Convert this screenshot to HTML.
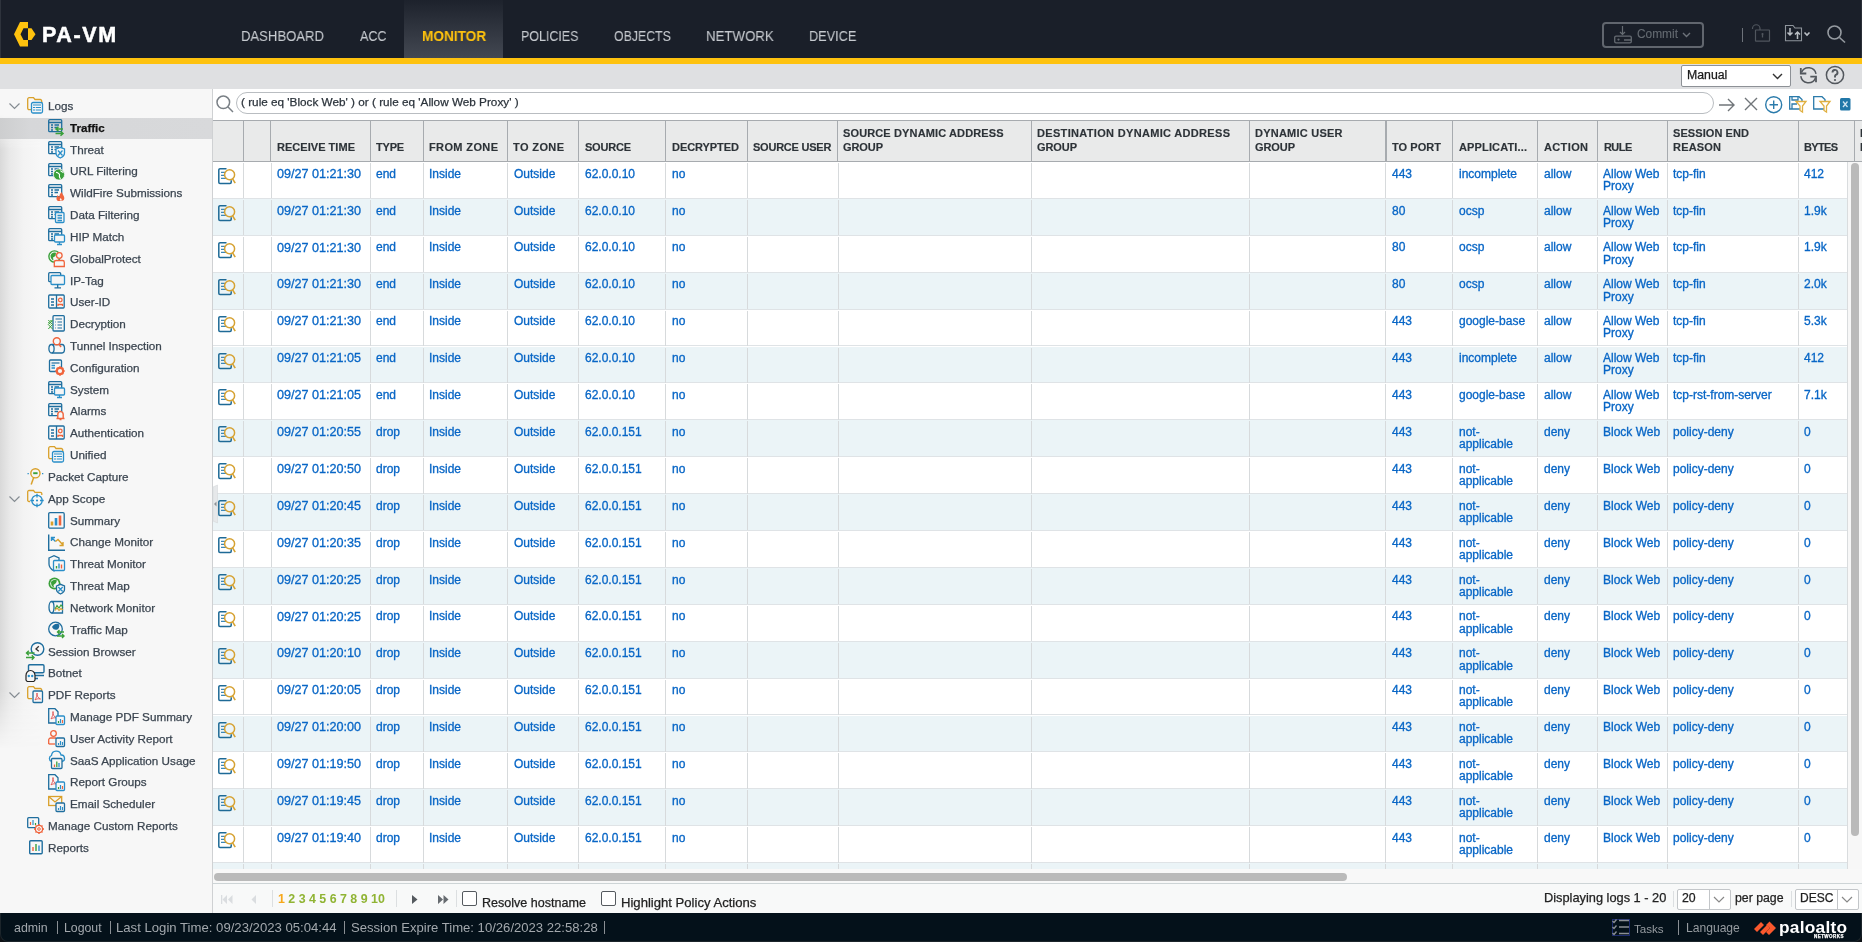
<!DOCTYPE html><html><head><meta charset="utf-8"><style>
*{box-sizing:border-box;margin:0;padding:0}
html,body{width:1862px;height:942px;overflow:hidden;background:#fff;font-family:"Liberation Sans",sans-serif}
.t{position:absolute;white-space:pre;line-height:1;-webkit-text-stroke:0.25px currentColor;will-change:transform}
.a{position:absolute}
svg{position:absolute;overflow:visible}
</style></head><body>
<div class="a" style="left:0;top:0;width:1862px;height:58px;background:#1a1f29"></div>
<div class="a" style="left:404px;top:0;width:99px;height:58px;background:linear-gradient(#1d222c,#434852)"></div>
<div class="a" style="left:0;top:0;width:1px;height:58px;background:#2e333c"></div>
<div class="a" style="left:1861px;top:0;width:1px;height:58px;background:#2a2f38"></div>
<div class="a" style="left:0;top:58px;width:1862px;height:6px;background:#fec20e"></div>
<svg style="left:14px;top:22px" width="23" height="25" viewBox="0 0 23 25"><path d="M14 0H6L0 12.3L6 24.6H14V18H9.5L6.5 12.3L9.5 6.2H14Z" fill="#fec20e"/><path d="M14 6.2H17.5L21.5 12.3L17.5 18H14Z" fill="#fec20e"/></svg>
<div class="t" style="left:42px;top:24.80px;font-size:21.5px;color:#ffffff;font-weight:bold;letter-spacing:0.075em;-webkit-text-stroke:0.5px currentColor;">PA-VM</div>
<div class="t" style="left:241px;top:27.50px;font-size:15.0px;color:#c6cacf;font-weight:normal;transform:scaleX(0.8733);transform-origin:0 0;-webkit-text-stroke:0.05px currentColor;">DASHBOARD</div>
<div class="t" style="left:359.7px;top:27.50px;font-size:15.0px;color:#c6cacf;font-weight:normal;transform:scaleX(0.8400);transform-origin:0 0;-webkit-text-stroke:0.05px currentColor;">ACC</div>
<div class="t" style="left:421.7px;top:27.50px;font-size:15.0px;color:#fec20e;font-weight:bold;transform:scaleX(0.9087);transform-origin:0 0;-webkit-text-stroke:0.05px currentColor;">MONITOR</div>
<div class="t" style="left:521.1px;top:27.50px;font-size:15.0px;color:#c6cacf;font-weight:normal;transform:scaleX(0.8293);transform-origin:0 0;-webkit-text-stroke:0.05px currentColor;">POLICIES</div>
<div class="t" style="left:613.5px;top:27.50px;font-size:15.0px;color:#c6cacf;font-weight:normal;transform:scaleX(0.8213);transform-origin:0 0;-webkit-text-stroke:0.05px currentColor;">OBJECTS</div>
<div class="t" style="left:705.7px;top:27.50px;font-size:15.0px;color:#c6cacf;font-weight:normal;transform:scaleX(0.8833);transform-origin:0 0;-webkit-text-stroke:0.05px currentColor;">NETWORK</div>
<div class="t" style="left:808.8px;top:27.50px;font-size:15.0px;color:#c6cacf;font-weight:normal;transform:scaleX(0.8487);transform-origin:0 0;-webkit-text-stroke:0.05px currentColor;">DEVICE</div>
<div class="a" style="left:1602px;top:22px;width:102px;height:26px;border:2px solid #61666e;border-radius:4px"></div>
<svg style="left:1614px;top:26px" width="18" height="19" viewBox="0 0 18 19" fill="none" stroke="#656b72" stroke-width="1.2"><path d="M8.5 0V8.5M6 6L8.5 8.5L11 6"/><path d="M17.3 13.5V11.5A1.3 1.3 0 0 0 16 10.2H2A1.3 1.3 0 0 0 0.7 11.5V15.5A1.3 1.3 0 0 0 2 16.8H16A1.3 1.3 0 0 0 17.3 15.5V14H10" stroke-width="1.3"/><circle cx="4.5" cy="13.6" r="1.1" fill="#656b72" stroke="none"/></svg>
<div class="t" style="left:1637px;top:29.23px;font-size:11.9px;color:#656b72;font-weight:normal;-webkit-text-stroke:0.1px currentColor;">Commit</div>
<svg style="left:1682px;top:32px" width="9" height="6" viewBox="0 0 9 6" fill="none" stroke="#6d727a" stroke-width="1.4"><path d="M1 1L4.5 4.5L8 1"/></svg>
<div class="a" style="left:1741.5px;top:28px;width:1.5px;height:14px;background:#6d727a"></div>
<svg style="left:1752px;top:25px" width="19" height="18" viewBox="0 0 19 18" fill="none" stroke="#50565e" stroke-width="1.2"><path d="M0.5 4V3.5A3.7 3.7 0 0 1 8 3.5V5"/><rect x="3.5" y="5" width="14" height="11.2" rx="0.5"/><path d="M10.5 8.5V12.5" stroke-width="1.3"/><circle cx="10.5" cy="9" r="1" fill="#50565e" stroke="none"/></svg>
<svg style="left:1785px;top:25px" width="32" height="17" viewBox="0 0 32 17" fill="none" stroke="#8f959c" stroke-width="1.1"><path d="M0.5 0.5H8L10 3H16.5V15.8H0.5Z"/><path d="M5 3V10M2.5 7.5L5 10L7.5 7.5M12.5 14V7M10 9.5L12.5 7L15 9.5" stroke="#b9bec4" stroke-width="1.5"/><path d="M19.5 7.5L22 10L24.5 7.5" stroke="#b9bec4" stroke-width="1.6"/></svg>
<svg style="left:1827px;top:25px" width="19" height="18" viewBox="0 0 19 18" fill="none" stroke="#969ba1" stroke-width="1.6"><circle cx="7.5" cy="7.5" r="6.5"/><path d="M12.5 12.5L18 17.5"/></svg>
<div class="a" style="left:0;top:64px;width:1862px;height:25px;background:#dfe0e2"></div>
<div class="a" style="left:1681px;top:65px;width:110px;height:22px;background:#fff;border:1px solid #8d9196;border-radius:2px"></div>
<div class="t" style="left:1687px;top:69.09px;font-size:12.3px;color:#1a1a1a;font-weight:normal;">Manual</div>
<svg style="left:1772px;top:73px" width="11" height="7" viewBox="0 0 11 7" fill="none" stroke="#333" stroke-width="1.4"><path d="M1 1L5.5 5.5L10 1"/></svg>
<svg style="left:1799.5px;top:67px" width="17" height="16" viewBox="0 0 17 16" fill="none" stroke="#52575d" stroke-width="1.5"><path d="M16 6.8A7.6 7.6 0 0 0 1.6 5.2M0.8 9.2A7.6 7.6 0 0 0 15.4 11"/><path d="M0.8 1V6.5H6.3M10.3 9.6H16V15.2" stroke-width="1.8"/></svg>
<svg style="left:1826px;top:66px" width="18" height="18" viewBox="0 0 18 18" fill="none" stroke="#52575d" stroke-width="1.5"><circle cx="9" cy="9" r="8.6"/><path d="M6.5 6.5A2.5 2.5 0 1 1 9.8 8.8C9.2 9.2 9 9.6 9 10.5V11.5" stroke-width="1.9"/><circle cx="9" cy="14" r="1.1" fill="#52575d" stroke="none"/></svg>
<div class="a" style="left:0;top:89px;width:212px;height:824px;background:#f7f7f7"></div>
<div class="a" style="left:0;top:89px;width:40px;height:824px;background:linear-gradient(90deg,#d9d9d9 0px,#e9e9e9 10px,#f3f3f3 24px,#f7f7f7 40px);-webkit-mask-image:linear-gradient(180deg,transparent 0px,transparent 26px,#000 60px,#000 600px,transparent 660px)"></div>
<div class="a" style="left:212px;top:89px;width:1px;height:824px;background:#cfd1d3"></div>
<div class="a" style="left:0;top:118px;width:212px;height:21px;background:linear-gradient(90deg,#cdcecf,#d6d7d9 30px,#d8d9db)"></div>
<svg style="left:9px;top:103.10px" width="11" height="6" viewBox="0 0 11 6" fill="none" stroke="#858c92" stroke-width="1.2"><path d="M0.5 0.5L5.5 5.5L10.5 0.5"/></svg>
<svg style="left:27px;top:97px" width="17" height="17" viewBox="0 0 17 17" fill="none" stroke-width="1.3"><path d="M5 12.7H2.2A1.5 1.5 0 0 1 0.7 11.2V2.2A1.5 1.5 0 0 1 2.2 0.7H6.5L8 2.5H13.2A1.5 1.5 0 0 1 14.7 4V6" stroke="#d9a02a" stroke-width="1.3"/><rect x="4.5" y="5.5" width="11" height="10.5" rx="1.5" stroke="#2a8fc9" stroke-width="1.3" fill="#f7f7f7"/><path d="M6 8H14M6 10.5H14M6 13H14" stroke="#2a8fc9" stroke-width="1.1"/><path d="M8.5 9.5V14" stroke="#f7f7f7" stroke-width="0.7"/></svg>
<div class="t" style="left:48px;top:100.00px;font-size:11.7px;color:#3b4550;font-weight:normal;">Logs</div>
<svg style="left:48px;top:119px" width="17" height="17" viewBox="0 0 17 17" fill="none" stroke-width="1.3"><rect x="0.7" y="0.7" width="13" height="12" rx="1" stroke="#1f6e9e"/><path d="M0.7 3.5H13.7M3 6H5M3 8.5H5M3 11H5M6.5 6H11M6.5 8.5H10" stroke="#1f6e9e"/><path d="M15 10H8M10.5 7.8L8 10L10.5 12.2M7.5 14.5H15M12.5 12.3L15 14.5L12.5 16.7" stroke="#3aa03a" stroke-width="1.5"/></svg>
<div class="t" style="left:70px;top:121.90px;font-size:11.6px;color:#111111;font-weight:bold;">Traffic</div>
<svg style="left:48px;top:141px" width="17" height="17" viewBox="0 0 17 17" fill="none" stroke-width="1.3"><rect x="0.7" y="0.7" width="13" height="12" rx="1" stroke="#1f6e9e"/><path d="M0.7 3.5H13.7M3 6H5M3 8.5H5M3 11H5M6.5 6H11M6.5 8.5H10" stroke="#1f6e9e"/><path d="M8 8L12.3 6.3L16.5 8V12C16.5 14.5 14.5 16 12.3 17C10 16 8 14.5 8 12Z" stroke="#2a8fc9" fill="#f7f7f7"/><path d="M10 9.5L14.5 14.5M14.5 9.5L10 14.5" stroke="#2a8fc9"/></svg>
<div class="t" style="left:70px;top:143.64px;font-size:11.7px;color:#3b4550;font-weight:normal;">Threat</div>
<svg style="left:48px;top:163px" width="17" height="17" viewBox="0 0 17 17" fill="none" stroke-width="1.3"><rect x="0.7" y="0.7" width="13" height="12" rx="1" stroke="#1f6e9e"/><path d="M0.7 3.5H13.7M3 6H5M3 8.5H5M3 11H5M6.5 6H11M6.5 8.5H10" stroke="#1f6e9e"/><circle cx="11" cy="11.5" r="5.6" fill="#3aa03a" stroke="#f7f7f7" stroke-width="0.8"/><path d="M8 9.5C9.5 9 10.5 10.5 11.5 11.5C11 13 11.5 14.5 12.5 16M12.5 7.5C13 8.5 14.5 9 15.5 9.5" stroke="#fff" stroke-width="1.1"/></svg>
<div class="t" style="left:70px;top:165.46px;font-size:11.7px;color:#3b4550;font-weight:normal;">URL Filtering</div>
<svg style="left:48px;top:184px" width="17" height="17" viewBox="0 0 17 17" fill="none" stroke-width="1.3"><rect x="0.7" y="0.7" width="13" height="12" rx="1" stroke="#1f6e9e"/><path d="M0.7 3.5H13.7M3 6H5M3 8.5H5M3 11H5M6.5 6H11M6.5 8.5H10" stroke="#1f6e9e"/><path d="M10 17C8 16 8 13 9.8 11C10 12.5 10.8 13 11.5 12.5C11.3 10.5 12.8 8.5 14 8C13.8 10 16.5 11.5 16.3 14.5C16 16.3 14.5 17 13 17Z" fill="#f0643c"/><path d="M12 16.5C11.5 15.5 12 14.5 13 14C13 15 14 15.5 13.8 16.5Z" fill="#f7f7f7"/></svg>
<div class="t" style="left:70px;top:187.28px;font-size:11.7px;color:#3b4550;font-weight:normal;">WildFire Submissions</div>
<svg style="left:48px;top:206px" width="17" height="17" viewBox="0 0 17 17" fill="none" stroke-width="1.3"><rect x="0.7" y="0.7" width="13" height="12" rx="1" stroke="#1f6e9e"/><path d="M0.7 3.5H13.7M3 6H5M3 8.5H5M3 11H5M6.5 6H11M6.5 8.5H10" stroke="#1f6e9e"/><rect x="7.5" y="6.5" width="8.5" height="10" rx="1" stroke="#2a8fc9" fill="#f5f5f5"/><path d="M9.5 9.5H14M9.5 12H14M9.5 14.5H14" stroke="#2a8fc9"/></svg>
<div class="t" style="left:70px;top:209.10px;font-size:11.7px;color:#3b4550;font-weight:normal;">Data Filtering</div>
<svg style="left:48px;top:228px" width="17" height="17" viewBox="0 0 17 17" fill="none" stroke-width="1.3"><rect x="0.7" y="0.7" width="13" height="12" rx="1" stroke="#1f6e9e"/><path d="M0.7 3.5H13.7M3 6H5M3 8.5H5M3 11H5M6.5 6H11M6.5 8.5H10" stroke="#1f6e9e"/><rect x="6.5" y="7" width="10" height="7" rx="1" stroke="#2a8fc9" fill="#f5f5f5"/><path d="M11.5 14V16.5M9 16.5H14" stroke="#2a8fc9"/></svg>
<div class="t" style="left:70px;top:230.92px;font-size:11.7px;color:#3b4550;font-weight:normal;">HIP Match</div>
<svg style="left:48px;top:250px" width="17" height="17" viewBox="0 0 17 17" fill="none" stroke-width="1.3"><circle cx="6.5" cy="6.5" r="5.6" stroke="#3aa03a" stroke-width="1.4"/><path d="M2.5 5.5C3.5 3 6 2 8 3L7.5 6L5 7.5L5.5 10.5C3.5 9.5 2.5 8 2.5 5.5Z" fill="#3aa03a"/><circle cx="11.3" cy="5.5" r="2.8" stroke="#f0643c" stroke-width="1.3" fill="#f7f7f7"/><path d="M6.3 16.5V12.3A1.8 1.8 0 0 1 8.1 10.5H14.5A1.8 1.8 0 0 1 16.3 12.3V16.5Z" stroke="#f0643c" stroke-width="1.3" fill="#f7f7f7"/></svg>
<div class="t" style="left:70px;top:252.74px;font-size:11.7px;color:#3b4550;font-weight:normal;">GlobalProtect</div>
<svg style="left:48px;top:272px" width="17" height="17" viewBox="0 0 17 17" fill="none" stroke-width="1.3"><rect x="0.7" y="0.7" width="12" height="9" rx="1" stroke="#1f6e9e"/><rect x="3" y="3.5" width="13.5" height="9" rx="1" stroke="#2a8fc9" fill="#f5f5f5"/><path d="M9.7 12.5V15.5M6.5 15.8H13" stroke="#1f6e9e"/></svg>
<div class="t" style="left:70px;top:274.56px;font-size:11.7px;color:#3b4550;font-weight:normal;">IP-Tag</div>
<svg style="left:48px;top:293px" width="17" height="17" viewBox="0 0 17 17" fill="none" stroke-width="1.3"><rect x="0.7" y="2" width="15.5" height="13" rx="1" stroke="#1f6e9e"/><path d="M8.5 2V15M3 6H6M3 9H6M3 12H6" stroke="#1f6e9e"/><circle cx="12.3" cy="7" r="1.8" stroke="#f0643c"/><path d="M10 13V11.5H14.5V13" stroke="#f0643c"/></svg>
<div class="t" style="left:70px;top:296.38px;font-size:11.7px;color:#3b4550;font-weight:normal;">User-ID</div>
<svg style="left:48px;top:315px" width="17" height="17" viewBox="0 0 17 17" fill="none" stroke-width="1.3"><rect x="5" y="0.7" width="11.3" height="15.3" rx="1" stroke="#1f6e9e" stroke-width="1.3"/><path d="M7.5 4H14M9.5 7H14M9.5 10H14M9.5 13H14M7.3 7H8M7.3 10H8M7.3 13H8" stroke="#1f6e9e" stroke-width="1.2"/><path d="M0.3 5L4.5 9.5L0.3 14M4.5 5L0.3 9.5L4.5 14M0.3 7L2.5 9.5M2.4 5L4.5 7.2" stroke="#3aa03a" stroke-width="1"/></svg>
<div class="t" style="left:70px;top:318.20px;font-size:11.7px;color:#3b4550;font-weight:normal;">Decryption</div>
<svg style="left:48px;top:337px" width="17" height="17" viewBox="0 0 17 17" fill="none" stroke-width="1.3"><path d="M4 7.5H14A2.5 4.2 0 0 1 14 16H4" stroke="#1f6e9e" stroke-width="1.3"/><ellipse cx="3.5" cy="11.75" rx="2.6" ry="4.25" stroke="#1f6e9e" stroke-width="1.3"/><circle cx="8.8" cy="4.3" r="3.5" stroke="#f0643c" stroke-width="1.4" fill="#f7f7f7"/><path d="M11 7L13 10" stroke="#f0643c" stroke-width="1.5"/></svg>
<div class="t" style="left:70px;top:340.02px;font-size:11.7px;color:#3b4550;font-weight:normal;">Tunnel Inspection</div>
<svg style="left:48px;top:359px" width="17" height="17" viewBox="0 0 17 17" fill="none" stroke-width="1.3"><rect x="1.5" y="1" width="12" height="11.5" rx="1" stroke="#1f6e9e" stroke-width="1.3"/><path d="M3.5 4H11.5" stroke="#1f6e9e" stroke-width="1.2"/><path d="M3.5 6.5H7M3.5 9H7" stroke="#2a8fc9" stroke-width="1.3"/><circle cx="12" cy="12" r="3.2" stroke="#f0643c" stroke-width="2.2" fill="#f7f7f7"/><path d="M12 7.3V8.5M12 15.5V16.7M7.3 12H8.5M15.5 12H16.7M8.7 8.7L9.6 9.6M14.4 14.4L15.3 15.3M8.7 15.3L9.6 14.4M14.4 9.6L15.3 8.7" stroke="#f0643c" stroke-width="1.6"/></svg>
<div class="t" style="left:70px;top:361.84px;font-size:11.7px;color:#3b4550;font-weight:normal;">Configuration</div>
<svg style="left:48px;top:381px" width="17" height="17" viewBox="0 0 17 17" fill="none" stroke-width="1.3"><rect x="0.7" y="0.7" width="13" height="12" rx="1" stroke="#1f6e9e"/><path d="M0.7 3.5H13.7M3 6H5M3 8.5H5M3 11H5M6.5 6H11M6.5 8.5H10" stroke="#1f6e9e"/><rect x="6.5" y="7" width="10" height="7" rx="1" stroke="#2a8fc9" fill="#f5f5f5"/><path d="M11.5 14V16.5M9 16.5H14" stroke="#2a8fc9"/></svg>
<div class="t" style="left:70px;top:383.66px;font-size:11.7px;color:#3b4550;font-weight:normal;">System</div>
<svg style="left:48px;top:403px" width="17" height="17" viewBox="0 0 17 17" fill="none" stroke-width="1.3"><rect x="0.7" y="0.7" width="13" height="12" rx="1" stroke="#1f6e9e"/><path d="M0.7 3.5H13.7M3 6H5M3 8.5H5M3 11H5M6.5 6H11M6.5 8.5H10" stroke="#1f6e9e"/><path d="M8.5 15.5H16.5M9.8 15V11.5A2.7 2.9 0 0 1 15.2 11.5V15" stroke="#f0643c" stroke-width="1.4" fill="#f7f7f7"/><path d="M12.5 7.8V8.8M11.5 16.5H13.5" stroke="#f0643c" stroke-width="1.4"/></svg>
<div class="t" style="left:70px;top:405.48px;font-size:11.7px;color:#3b4550;font-weight:normal;">Alarms</div>
<svg style="left:48px;top:424px" width="17" height="17" viewBox="0 0 17 17" fill="none" stroke-width="1.3"><rect x="0.7" y="2" width="15.5" height="13" rx="1" stroke="#1f6e9e"/><path d="M8.5 2V15M3 6H6M3 9H6M3 12H6" stroke="#1f6e9e"/><circle cx="12.3" cy="7" r="1.8" stroke="#f0643c"/><path d="M10 13V11.5H14.5V13" stroke="#f0643c"/></svg>
<div class="t" style="left:70px;top:427.30px;font-size:11.7px;color:#3b4550;font-weight:normal;">Authentication</div>
<svg style="left:48px;top:446px" width="17" height="17" viewBox="0 0 17 17" fill="none" stroke-width="1.3"><path d="M5 12.7H2.2A1.5 1.5 0 0 1 0.7 11.2V2.2A1.5 1.5 0 0 1 2.2 0.7H6.5L8 2.5H13.2A1.5 1.5 0 0 1 14.7 4V6" stroke="#d9a02a" stroke-width="1.3"/><rect x="4.5" y="5.5" width="11" height="10.5" rx="1.5" stroke="#2a8fc9" stroke-width="1.3" fill="#f7f7f7"/><path d="M6 8H14M6 10.5H14M6 13H14" stroke="#2a8fc9" stroke-width="1.1"/><path d="M8.5 9.5V14" stroke="#f7f7f7" stroke-width="0.7"/></svg>
<div class="t" style="left:70px;top:449.12px;font-size:11.7px;color:#3b4550;font-weight:normal;">Unified</div>
<svg style="left:27px;top:468px" width="17" height="17" viewBox="0 0 17 17" fill="none" stroke-width="1.3"><circle cx="8.4" cy="5.3" r="4.6" stroke="#d9a02a" stroke-width="1.4"/><path d="M6.2 5.2H10.6" stroke="#3aa03a" stroke-width="1.9"/><path d="M6.6 9.8L4.2 16.5" stroke="#d9a02a" stroke-width="1.5"/><path d="M0.5 5.7H1.8M15 5.7H16.3" stroke="#2a8fc9" stroke-width="1.2"/></svg>
<div class="t" style="left:48px;top:470.94px;font-size:11.7px;color:#3b4550;font-weight:normal;">Packet Capture</div>
<svg style="left:9px;top:495.86px" width="11" height="6" viewBox="0 0 11 6" fill="none" stroke="#858c92" stroke-width="1.2"><path d="M0.5 0.5L5.5 5.5L10.5 0.5"/></svg>
<svg style="left:27px;top:490px" width="17" height="17" viewBox="0 0 17 17" fill="none" stroke-width="1.3"><path d="M3 11.5H2A1.3 1.3 0 0 1 0.7 10.2V1.8A1.3 1.3 0 0 1 2 0.5H6.5L8 2.3H13.5A1.3 1.3 0 0 1 14.8 3.6V5" stroke="#d9a02a" stroke-width="1.3"/><circle cx="10" cy="10.5" r="5.2" stroke="#2a8fc9" stroke-width="1.3" fill="#f7f7f7"/><path d="M10 3.8V7.5M10 13.5V17.2M3.3 10.5H7M13 10.5H16.7" stroke="#2a8fc9" stroke-width="1.3"/><circle cx="10" cy="10.5" r="1.1" fill="#2a8fc9"/></svg>
<div class="t" style="left:48px;top:492.76px;font-size:11.7px;color:#3b4550;font-weight:normal;">App Scope</div>
<svg style="left:48px;top:512px" width="17" height="17" viewBox="0 0 17 17" fill="none" stroke-width="1.3"><rect x="0.7" y="0.7" width="15.5" height="15.5" rx="1.2" stroke="#1f6e9e"/><path d="M4 13.5V9.5" stroke="#d9a02a" stroke-width="2.6"/><path d="M8 13.5V6" stroke="#2a8fc9" stroke-width="2.6"/><path d="M12 13.5V3.5" stroke="#f0643c" stroke-width="2.6"/></svg>
<div class="t" style="left:70px;top:514.58px;font-size:11.7px;color:#3b4550;font-weight:normal;">Summary</div>
<svg style="left:48px;top:534px" width="17" height="17" viewBox="0 0 17 17" fill="none" stroke-width="1.3"><path d="M0.7 0.5V16.3H17" stroke="#1f6e9e" stroke-width="1.4"/><path d="M3.5 3.5L7.5 7.5M3.5 7V3.5H7" stroke="#2a8fc9" stroke-width="1.4"/><path d="M7.5 7.5L10 5.5L15 11M11.5 11.5H15V8" stroke="#d9a02a" stroke-width="1.4"/></svg>
<div class="t" style="left:70px;top:536.40px;font-size:11.7px;color:#3b4550;font-weight:normal;">Change Monitor</div>
<svg style="left:48px;top:555px" width="17" height="17" viewBox="0 0 17 17" fill="none" stroke-width="1.3"><path d="M1 3L6 0.7L11 3V9C11 12 8.5 14.5 6 16C3.5 14.5 1 12 1 9Z" stroke="#1f6e9e"/><rect x="5.5" y="5.5" width="11" height="10" rx="1" stroke="#2a8fc9" fill="#f7f7f7"/><path d="M8.5 13.5V11" stroke="#3aa03a" stroke-width="1.4"/><path d="M11 13.5V8.5" stroke="#2a8fc9" stroke-width="1.4"/><path d="M13.5 13.5V9.5" stroke="#f0643c" stroke-width="1.4"/></svg>
<div class="t" style="left:70px;top:558.22px;font-size:11.7px;color:#3b4550;font-weight:normal;">Threat Monitor</div>
<svg style="left:48px;top:577px" width="17" height="17" viewBox="0 0 17 17" fill="none" stroke-width="1.3"><circle cx="6.5" cy="6.5" r="6" fill="#3aa03a"/><circle cx="6.5" cy="6.5" r="4.3" fill="#f7f7f7"/><path d="M3 5C4.5 3 7 2.5 9 3.5L8 6L5.5 8L6 10.5C4 10 3 8 3 5Z" fill="#3aa03a"/><path d="M8.5 9L12.5 7.3L16.5 9V12.5C16.5 14.5 14.8 16 12.5 17C10.2 16 8.5 14.5 8.5 12.5Z" stroke="#1f6e9e" fill="#f7f7f7"/><path d="M10.3 10L14.7 14.5M14.7 10L10.3 14.5" stroke="#2a8fc9"/></svg>
<div class="t" style="left:70px;top:580.04px;font-size:11.7px;color:#3b4550;font-weight:normal;">Threat Map</div>
<svg style="left:48px;top:599px" width="17" height="17" viewBox="0 0 17 17" fill="none" stroke-width="1.3"><path d="M3.5 2.5H14.5V14H3.5" stroke="#1f6e9e" stroke-width="1.3"/><ellipse cx="3.5" cy="8.25" rx="2.5" ry="5.75" stroke="#1f6e9e" stroke-width="1.3"/><path d="M7 10L9 6.5L11 9L13 6L15 8.5" stroke="#3aa03a" stroke-width="1.1"/><path d="M7 11.5L9 9L11 11.5L13 9.5L15 11" stroke="#d9a02a" stroke-width="1.1"/></svg>
<div class="t" style="left:70px;top:601.86px;font-size:11.7px;color:#3b4550;font-weight:normal;">Network Monitor</div>
<svg style="left:48px;top:621px" width="17" height="17" viewBox="0 0 17 17" fill="none" stroke-width="1.3"><circle cx="7.5" cy="8" r="6.8" stroke="#1f6e9e" stroke-width="1.3"/><path d="M4 6C5 3.5 8 2 10.5 3C12 4 11.5 7 9.5 8.5C7.5 9 5.5 9 4 6Z" fill="#1f6e9e"/><path d="M16 11H9.5M11.5 9L9.5 11L11.5 13M9 15H16M14 13L16 15L14 17" stroke="#3aa03a" stroke-width="1.4" fill="#f7f7f7"/></svg>
<div class="t" style="left:70px;top:623.68px;font-size:11.7px;color:#3b4550;font-weight:normal;">Traffic Map</div>
<svg style="left:27px;top:643px" width="17" height="17" viewBox="0 0 17 17" fill="none" stroke-width="1.3"><circle cx="10.5" cy="6" r="6.3" stroke="#1f6e9e" stroke-width="1.4" fill="#f7f7f7"/><path d="M11.8 3.3L9 6L11.8 8.2" stroke="#333" stroke-width="1.3"/><path d="M7.5 10H-0.5M1.8 7.8L-0.5 10L1.8 12.2M-1 14.5H7M4.8 12.3L7 14.5L4.8 16.7" stroke="#3aa03a" stroke-width="1.4"/></svg>
<div class="t" style="left:48px;top:645.50px;font-size:11.7px;color:#3b4550;font-weight:normal;">Session Browser</div>
<svg style="left:27px;top:664px" width="17" height="17" viewBox="0 0 17 17" fill="none" stroke-width="1.3"><rect x="1.5" y="0.7" width="15.5" height="8" rx="1.2" stroke="#1f6e9e" stroke-width="1.4"/><path d="M6 11.5H17M6 14.5H11" stroke="#1f6e9e" stroke-width="1.4"/><path d="M-1 11.5A4.5 5 0 0 1 8 11.5V16L6.8 17.5H0.2L-1 16Z" stroke="#222" stroke-width="1.2" fill="#f7f7f7"/><circle cx="1.8" cy="12" r="1.2" fill="#2a8fc9"/><circle cx="5.2" cy="12" r="1.2" fill="#2a8fc9"/></svg>
<div class="t" style="left:48px;top:667.32px;font-size:11.7px;color:#3b4550;font-weight:normal;">Botnet</div>
<svg style="left:9px;top:692.24px" width="11" height="6" viewBox="0 0 11 6" fill="none" stroke="#858c92" stroke-width="1.2"><path d="M0.5 0.5L5.5 5.5L10.5 0.5"/></svg>
<svg style="left:27px;top:686px" width="17" height="17" viewBox="0 0 17 17" fill="none" stroke-width="1.3"><path d="M5 12.7H2.2A1.5 1.5 0 0 1 0.7 11.2V2.2A1.5 1.5 0 0 1 2.2 0.7H6.5L8 2.5H13.2A1.5 1.5 0 0 1 14.7 4V6" stroke="#d9a02a" stroke-width="1.3"/><rect x="6" y="5" width="9.5" height="11.5" rx="1" stroke="#1f6e9e" fill="#f7f7f7"/><path d="M8 14C9 12 10.5 9.5 10 7C9.5 9.5 11 12 13.5 13C11 12.5 9 13 8 14Z" stroke="#e05050" stroke-width="0.9"/></svg>
<div class="t" style="left:48px;top:689.14px;font-size:11.7px;color:#3b4550;font-weight:normal;">PDF Reports</div>
<svg style="left:48px;top:708px" width="17" height="17" viewBox="0 0 17 17" fill="none" stroke-width="1.3"><path d="M0.7 0.7H7L10 3.7V15H0.7Z" stroke="#1f6e9e"/><path d="M3 11C4 9 5.5 6 5 3.5C4.5 6 6 9 8.5 10C6 9.5 4 10 3 11Z" stroke="#e05050" stroke-width="0.9"/><rect x="8" y="8" width="8.5" height="8.5" rx="1" stroke="#2a8fc9" fill="#f7f7f7"/><path d="M10.5 15V13" stroke="#3aa03a" stroke-width="1.2"/><path d="M12.5 15V11" stroke="#2a8fc9" stroke-width="1.2"/><path d="M14.5 15V12" stroke="#f0643c" stroke-width="1.2"/></svg>
<div class="t" style="left:70px;top:710.96px;font-size:11.7px;color:#3b4550;font-weight:normal;">Manage PDF Summary</div>
<svg style="left:48px;top:730px" width="17" height="17" viewBox="0 0 17 17" fill="none" stroke-width="1.3"><circle cx="5.5" cy="3.5" r="2.8" stroke="#f0643c"/><path d="M0.7 14V10A2 2 0 0 1 2.7 8H8" stroke="#f0643c"/><path d="M0.7 14H7" stroke="#f0643c"/><rect x="8" y="8" width="8.5" height="8.5" rx="1" stroke="#1f6e9e" fill="#f5f5f5"/><path d="M10.5 15V13M12.5 15V11M14.5 15V12" stroke="#2a8fc9" stroke-width="1.2"/></svg>
<div class="t" style="left:70px;top:732.78px;font-size:11.7px;color:#3b4550;font-weight:normal;">User Activity Report</div>
<svg style="left:48px;top:752px" width="17" height="17" viewBox="0 0 17 17" fill="none" stroke-width="1.3"><path d="M3.5 9.5A3.2 3.2 0 0 1 3.5 3.5A4.8 4.8 0 0 1 13 3A3.3 3.3 0 0 1 14 9.5" stroke="#2a8fc9" stroke-width="1.3"/><rect x="3.5" y="6.5" width="10.5" height="10" rx="1" stroke="#1f6e9e" stroke-width="1.3" fill="#f7f7f7"/><path d="M6.5 15V12.5" stroke="#f0643c" stroke-width="1.3"/><path d="M8.8 15V9.5" stroke="#3aa03a" stroke-width="1.3"/><path d="M11 15V11" stroke="#2a8fc9" stroke-width="1.3"/></svg>
<div class="t" style="left:70px;top:754.60px;font-size:11.7px;color:#3b4550;font-weight:normal;">SaaS Application Usage</div>
<svg style="left:48px;top:774px" width="17" height="17" viewBox="0 0 17 17" fill="none" stroke-width="1.3"><path d="M0.7 0.7H7L10 3.7V15H0.7Z" stroke="#1f6e9e"/><path d="M3 11C4 9 5.5 6 5 3.5C4.5 6 6 9 8.5 10C6 9.5 4 10 3 11Z" stroke="#e05050" stroke-width="0.9"/><rect x="8" y="8" width="8.5" height="8.5" rx="1" stroke="#2a8fc9" fill="#f7f7f7"/><path d="M10.5 15V13" stroke="#3aa03a" stroke-width="1.2"/><path d="M12.5 15V11" stroke="#2a8fc9" stroke-width="1.2"/><path d="M14.5 15V12" stroke="#f0643c" stroke-width="1.2"/></svg>
<div class="t" style="left:70px;top:776.42px;font-size:11.7px;color:#3b4550;font-weight:normal;">Report Groups</div>
<svg style="left:48px;top:795px" width="17" height="17" viewBox="0 0 17 17" fill="none" stroke-width="1.3"><rect x="0.7" y="1.5" width="13" height="9" stroke="#d9a02a"/><path d="M0.7 1.5L7 7L13.7 1.5" stroke="#d9a02a"/><rect x="8" y="8" width="8.5" height="8.5" rx="1" stroke="#1f6e9e" fill="#f5f5f5"/><path d="M10.5 15V13M12.5 15V11M14.5 15V12" stroke="#2a8fc9" stroke-width="1.2"/></svg>
<div class="t" style="left:70px;top:798.24px;font-size:11.7px;color:#3b4550;font-weight:normal;">Email Scheduler</div>
<svg style="left:27px;top:817px" width="17" height="17" viewBox="0 0 17 17" fill="none" stroke-width="1.3"><rect x="0.7" y="0.7" width="11" height="10" rx="1" stroke="#1f6e9e"/><path d="M3.5 8V5" stroke="#f0643c" stroke-width="1.2"/><path d="M6 8V3" stroke="#2a8fc9" stroke-width="1.2"/><path d="M8.5 8V6" stroke="#3aa03a" stroke-width="1.2"/><circle cx="12" cy="12" r="3.6" stroke="#f0643c" stroke-width="1.3" fill="#f7f7f7"/><circle cx="12" cy="12" r="1.3" stroke="#f0643c" stroke-width="1"/><path d="M12 7V8.2M12 15.8V17M7 12H8.2M15.8 12H17M8.5 8.5L9.3 9.3M14.7 14.7L15.5 15.5M8.5 15.5L9.3 14.7M14.7 9.3L15.5 8.5" stroke="#f0643c" stroke-width="1.4"/></svg>
<div class="t" style="left:48px;top:820.06px;font-size:11.7px;color:#3b4550;font-weight:normal;">Manage Custom Reports</div>
<svg style="left:27px;top:839px" width="17" height="17" viewBox="0 0 17 17" fill="none" stroke-width="1.3"><rect x="2.7" y="1.7" width="12.5" height="13" rx="1" stroke="#1f6e9e" stroke-width="1.4"/><path d="M6 12V8" stroke="#f0643c" stroke-width="1.4"/><path d="M9 12V5" stroke="#3aa03a" stroke-width="1.4"/><path d="M12 12V6.5" stroke="#2a8fc9" stroke-width="1.4"/></svg>
<div class="t" style="left:48px;top:841.88px;font-size:11.7px;color:#3b4550;font-weight:normal;">Reports</div>
<svg style="left:216px;top:95px" width="18" height="18" viewBox="0 0 18 18" fill="none" stroke="#7a8086" stroke-width="1.5"><circle cx="7.3" cy="7.3" r="6.3"/><path d="M11.8 11.8L17 17"/></svg>
<div class="a" style="left:235.8px;top:92px;width:1478.5px;height:22px;border:1px solid #b9bdc1;border-radius:11px;background:#fff"></div>
<div class="t" style="left:240.5px;top:95.65px;font-size:11.75px;color:#2b333b;font-weight:normal;">( rule eq 'Block Web' ) or ( rule eq 'Allow Web Proxy' )</div>
<svg style="left:1719px;top:98px" width="16" height="14" viewBox="0 0 16 14" fill="none" stroke="#707579" stroke-width="1.4"><path d="M0 7H15M9 1L15 7L9 13"/></svg>
<svg style="left:1744px;top:97px" width="14" height="14" viewBox="0 0 14 14" fill="none" stroke="#707579" stroke-width="1.4"><path d="M1 1L13 13M13 1L1 13"/></svg>
<svg style="left:1765px;top:96px" width="18" height="18" viewBox="0 0 18 18" fill="none" stroke="#2b7bab" stroke-width="1.4"><circle cx="8.7" cy="8.7" r="8"/><path d="M8.7 4.5V13M4.5 8.7H13"/></svg>
<svg style="left:1789px;top:96px" width="18" height="17" viewBox="0 0 18 17" fill="none" stroke-width="1.3"><path d="M0.7 0.7H10L13 3.5V13H0.7Z" stroke="#2b7bab"/><path d="M3 0.7V4H9V0.7M3 13V8H8" stroke="#2b7bab"/><path d="M7 5.5H17L13.5 10V16L11 14.5V10Z" stroke="#e0b040" fill="#fff"/></svg>
<svg style="left:1813px;top:96px" width="18" height="17" viewBox="0 0 18 17" fill="none" stroke-width="1.3"><path d="M0.7 0.7H9L12 3.5V13H0.7Z" stroke="#2b7bab"/><path d="M7 5.5H17L13.5 10V16L11 14.5V10Z" stroke="#e0b040" fill="#fff"/></svg>
<svg style="left:1840px;top:98px" width="11" height="13" viewBox="0 0 11 13"><rect x="0" y="0" width="10.5" height="12.5" rx="1.5" fill="#2177a8"/><path d="M3 3.5L7.5 9M7.5 3.5L3 9" stroke="#cfe4f0" stroke-width="1.3"/></svg>
<div class="a" style="left:213px;top:120px;width:1649px;height:42px;background:#e9eaea;border-top:1.5px solid #a7abaf;border-bottom:1.5px solid #a7abaf"></div>
<div class="a" style="left:243.0px;top:121px;width:1.3px;height:40px;background:#a7abaf"></div>
<div class="a" style="left:270.1px;top:121px;width:1.3px;height:40px;background:#a7abaf"></div>
<div class="a" style="left:369.8px;top:121px;width:1.3px;height:40px;background:#a7abaf"></div>
<div class="a" style="left:422.9px;top:121px;width:1.3px;height:40px;background:#a7abaf"></div>
<div class="a" style="left:506.9px;top:121px;width:1.3px;height:40px;background:#a7abaf"></div>
<div class="a" style="left:578.1px;top:121px;width:1.3px;height:40px;background:#a7abaf"></div>
<div class="a" style="left:665.1px;top:121px;width:1.3px;height:40px;background:#a7abaf"></div>
<div class="a" style="left:746.7px;top:121px;width:1.3px;height:40px;background:#a7abaf"></div>
<div class="a" style="left:836.9px;top:121px;width:1.3px;height:40px;background:#a7abaf"></div>
<div class="a" style="left:1030.8px;top:121px;width:1.3px;height:40px;background:#a7abaf"></div>
<div class="a" style="left:1248.7px;top:121px;width:1.3px;height:40px;background:#a7abaf"></div>
<div class="a" style="left:1385.3px;top:121px;width:1.3px;height:40px;background:#a7abaf"></div>
<div class="a" style="left:1452.0px;top:121px;width:1.3px;height:40px;background:#a7abaf"></div>
<div class="a" style="left:1537.0px;top:121px;width:1.3px;height:40px;background:#a7abaf"></div>
<div class="a" style="left:1597.0px;top:121px;width:1.3px;height:40px;background:#a7abaf"></div>
<div class="a" style="left:1666.8px;top:121px;width:1.3px;height:40px;background:#a7abaf"></div>
<div class="a" style="left:1797.6px;top:121px;width:1.3px;height:40px;background:#a7abaf"></div>
<div class="a" style="left:1853.8px;top:121px;width:1.3px;height:40px;background:#a7abaf"></div>
<div class="t" style="left:276.5px;top:141.69px;font-size:11px;color:#2d3338;font-weight:bold;letter-spacing:0.034px;-webkit-text-stroke:0.15px currentColor;">RECEIVE TIME</div>
<div class="t" style="left:376.3px;top:141.69px;font-size:11px;color:#2d3338;font-weight:bold;letter-spacing:-0.178px;-webkit-text-stroke:0.15px currentColor;">TYPE</div>
<div class="t" style="left:429.4px;top:141.69px;font-size:11px;color:#2d3338;font-weight:bold;letter-spacing:0.375px;-webkit-text-stroke:0.15px currentColor;">FROM ZONE</div>
<div class="t" style="left:513.4px;top:141.69px;font-size:11px;color:#2d3338;font-weight:bold;letter-spacing:0.383px;-webkit-text-stroke:0.15px currentColor;">TO ZONE</div>
<div class="t" style="left:584.6px;top:141.69px;font-size:11px;color:#2d3338;font-weight:bold;letter-spacing:-0.212px;-webkit-text-stroke:0.15px currentColor;">SOURCE</div>
<div class="t" style="left:671.6px;top:141.69px;font-size:11px;color:#2d3338;font-weight:bold;letter-spacing:-0.055px;-webkit-text-stroke:0.15px currentColor;">DECRYPTED</div>
<div class="t" style="left:753.2px;top:141.69px;font-size:11px;color:#2d3338;font-weight:bold;letter-spacing:-0.229px;-webkit-text-stroke:0.15px currentColor;">SOURCE USER</div>
<div class="t" style="left:843.4px;top:127.69px;font-size:11px;color:#2d3338;font-weight:bold;letter-spacing:0.129px;-webkit-text-stroke:0.15px currentColor;">SOURCE DYNAMIC ADDRESS</div>
<div class="t" style="left:843.4px;top:141.69px;font-size:11px;color:#2d3338;font-weight:bold;letter-spacing:-0.086px;-webkit-text-stroke:0.15px currentColor;">GROUP</div>
<div class="t" style="left:1037.3px;top:127.69px;font-size:11px;color:#2d3338;font-weight:bold;letter-spacing:0.325px;-webkit-text-stroke:0.15px currentColor;">DESTINATION DYNAMIC ADDRESS</div>
<div class="t" style="left:1037.3px;top:141.69px;font-size:11px;color:#2d3338;font-weight:bold;letter-spacing:-0.086px;-webkit-text-stroke:0.15px currentColor;">GROUP</div>
<div class="t" style="left:1255.2px;top:127.69px;font-size:11px;color:#2d3338;font-weight:bold;letter-spacing:0.232px;-webkit-text-stroke:0.15px currentColor;">DYNAMIC USER</div>
<div class="t" style="left:1255.2px;top:141.69px;font-size:11px;color:#2d3338;font-weight:bold;letter-spacing:-0.086px;-webkit-text-stroke:0.15px currentColor;">GROUP</div>
<div class="t" style="left:1391.8px;top:141.69px;font-size:11px;color:#2d3338;font-weight:bold;letter-spacing:0.049px;-webkit-text-stroke:0.15px currentColor;">TO PORT</div>
<div class="t" style="left:1458.5px;top:141.69px;font-size:11px;color:#2d3338;font-weight:bold;letter-spacing:0.143px;-webkit-text-stroke:0.15px currentColor;">APPLICATI...</div>
<div class="t" style="left:1543.5px;top:141.69px;font-size:11px;color:#2d3338;font-weight:bold;letter-spacing:0.366px;-webkit-text-stroke:0.15px currentColor;">ACTION</div>
<div class="t" style="left:1603.5px;top:141.69px;font-size:11px;color:#2d3338;font-weight:bold;letter-spacing:-0.57px;-webkit-text-stroke:0.15px currentColor;">RULE</div>
<div class="t" style="left:1673.3px;top:127.69px;font-size:11px;color:#2d3338;font-weight:bold;letter-spacing:0.081px;-webkit-text-stroke:0.15px currentColor;">SESSION END</div>
<div class="t" style="left:1673.3px;top:141.69px;font-size:11px;color:#2d3338;font-weight:bold;letter-spacing:0.188px;-webkit-text-stroke:0.15px currentColor;">REASON</div>
<div class="t" style="left:1804.1px;top:141.69px;font-size:11px;color:#2d3338;font-weight:bold;letter-spacing:-0.672px;-webkit-text-stroke:0.15px currentColor;">BYTES</div>
<div class="t" style="left:1860.3px;top:127.69px;font-size:11px;color:#2d3338;font-weight:bold;letter-spacing:0px;-webkit-text-stroke:0.15px currentColor;">I</div>
<div class="t" style="left:1860.3px;top:141.69px;font-size:11px;color:#2d3338;font-weight:bold;letter-spacing:0px;-webkit-text-stroke:0.15px currentColor;">I</div>
<div class="a" style="left:213px;top:162px;width:1635px;height:708px;overflow:hidden;border-right:1px solid #d9dcde;border-bottom:1px solid #d9dcde">
<div class="a" style="left:0;top:0.00px;width:1635px;height:36.90px;background:#ffffff;border-bottom:1px solid #dfe3e6"></div>
<div class="a" style="left:30.0px;top:1.00px;width:1.2px;height:35.40px;background:#d7dadc"></div>
<div class="a" style="left:57.9px;top:1.00px;width:1.2px;height:35.40px;background:#d7dadc"></div>
<div class="a" style="left:156.8px;top:1.00px;width:1.2px;height:35.40px;background:#d7dadc"></div>
<div class="a" style="left:209.9px;top:1.00px;width:1.2px;height:35.40px;background:#d7dadc"></div>
<div class="a" style="left:293.9px;top:1.00px;width:1.2px;height:35.40px;background:#d7dadc"></div>
<div class="a" style="left:365.1px;top:1.00px;width:1.2px;height:35.40px;background:#d7dadc"></div>
<div class="a" style="left:452.1px;top:1.00px;width:1.2px;height:35.40px;background:#d7dadc"></div>
<div class="a" style="left:533.7px;top:1.00px;width:1.2px;height:35.40px;background:#d7dadc"></div>
<div class="a" style="left:624.8px;top:1.00px;width:1.2px;height:35.40px;background:#d7dadc"></div>
<div class="a" style="left:817.8px;top:1.00px;width:1.2px;height:35.40px;background:#d7dadc"></div>
<div class="a" style="left:1035.7px;top:1.00px;width:1.2px;height:35.40px;background:#d7dadc"></div>
<div class="a" style="left:1172.3px;top:1.00px;width:1.2px;height:35.40px;background:#d7dadc"></div>
<div class="a" style="left:1239.0px;top:1.00px;width:1.2px;height:35.40px;background:#d7dadc"></div>
<div class="a" style="left:1324.0px;top:1.00px;width:1.2px;height:35.40px;background:#d7dadc"></div>
<div class="a" style="left:1384.0px;top:1.00px;width:1.2px;height:35.40px;background:#d7dadc"></div>
<div class="a" style="left:1453.8px;top:1.00px;width:1.2px;height:35.40px;background:#d7dadc"></div>
<div class="a" style="left:1584.6px;top:1.00px;width:1.2px;height:35.40px;background:#d7dadc"></div>
<svg style="left:5px;top:6.00px" width="19" height="19" viewBox="0 0 19 19" fill="none"><path d="M8.5 0.8H2A1.2 1.2 0 0 0 0.8 2V14.3A1.2 1.2 0 0 0 2 15.5H12A1.2 1.2 0 0 0 13.2 14.3V12.3" stroke="#1e6a96" stroke-width="1.5"/><path d="M3 4.3H7M3 7.3H6.2M3 10.3H8.5" stroke="#3f88b8" stroke-width="1.3"/><circle cx="11.6" cy="6.8" r="5" stroke="#d6a232" stroke-width="1.5"/><path d="M14.6 10.8L17.2 15.2" stroke="#d6a232" stroke-width="1.6"/></svg>
<div class="t" style="left:63.80000000000001px;top:5.73px;font-size:12.6px;color:#0866c6;font-weight:normal;-webkit-text-stroke:0.32px currentColor;">09/27 01:21:30</div>
<div class="t" style="left:163.3px;top:5.64px;font-size:12px;color:#0866c6;font-weight:normal;-webkit-text-stroke:0.32px currentColor;">end</div>
<div class="t" style="left:216.39999999999998px;top:5.64px;font-size:12px;color:#0866c6;font-weight:normal;-webkit-text-stroke:0.32px currentColor;">Inside</div>
<div class="t" style="left:300.6px;top:5.64px;font-size:12px;color:#0866c6;font-weight:normal;-webkit-text-stroke:0.32px currentColor;">Outside</div>
<div class="t" style="left:371.6px;top:5.64px;font-size:12px;color:#0866c6;font-weight:normal;-webkit-text-stroke:0.32px currentColor;">62.0.0.10</div>
<div class="t" style="left:458.70000000000005px;top:5.64px;font-size:12px;color:#0866c6;font-weight:normal;-webkit-text-stroke:0.32px currentColor;">no</div>
<div class="t" style="left:1179px;top:5.64px;font-size:12px;color:#0866c6;font-weight:normal;-webkit-text-stroke:0.32px currentColor;">443</div>
<div class="t" style="left:1245.6px;top:5.64px;font-size:12px;color:#0866c6;font-weight:normal;-webkit-text-stroke:0.32px currentColor;">incomplete</div>
<div class="t" style="left:1330.5px;top:5.64px;font-size:12px;color:#0866c6;font-weight:normal;-webkit-text-stroke:0.32px currentColor;">allow</div>
<div class="t" style="left:1390.3px;top:5.64px;font-size:12px;color:#0866c6;font-weight:normal;-webkit-text-stroke:0.32px currentColor;">Allow Web</div>
<div class="t" style="left:1390.3px;top:17.84px;font-size:12px;color:#0866c6;font-weight:normal;-webkit-text-stroke:0.32px currentColor;">Proxy</div>
<div class="t" style="left:1460px;top:5.64px;font-size:12px;color:#0866c6;font-weight:normal;-webkit-text-stroke:0.32px currentColor;">tcp-fin</div>
<div class="t" style="left:1591px;top:5.64px;font-size:12px;color:#0866c6;font-weight:normal;-webkit-text-stroke:0.32px currentColor;">412</div>
<div class="a" style="left:0;top:36.90px;width:1635px;height:36.90px;background:#ebf4f7;border-bottom:1px solid #dfe3e6"></div>
<div class="a" style="left:30.0px;top:37.90px;width:1.2px;height:35.40px;background:#d7dadc"></div>
<div class="a" style="left:57.9px;top:37.90px;width:1.2px;height:35.40px;background:#d7dadc"></div>
<div class="a" style="left:156.8px;top:37.90px;width:1.2px;height:35.40px;background:#d7dadc"></div>
<div class="a" style="left:209.9px;top:37.90px;width:1.2px;height:35.40px;background:#d7dadc"></div>
<div class="a" style="left:293.9px;top:37.90px;width:1.2px;height:35.40px;background:#d7dadc"></div>
<div class="a" style="left:365.1px;top:37.90px;width:1.2px;height:35.40px;background:#d7dadc"></div>
<div class="a" style="left:452.1px;top:37.90px;width:1.2px;height:35.40px;background:#d7dadc"></div>
<div class="a" style="left:533.7px;top:37.90px;width:1.2px;height:35.40px;background:#d7dadc"></div>
<div class="a" style="left:624.8px;top:37.90px;width:1.2px;height:35.40px;background:#d7dadc"></div>
<div class="a" style="left:817.8px;top:37.90px;width:1.2px;height:35.40px;background:#d7dadc"></div>
<div class="a" style="left:1035.7px;top:37.90px;width:1.2px;height:35.40px;background:#d7dadc"></div>
<div class="a" style="left:1172.3px;top:37.90px;width:1.2px;height:35.40px;background:#d7dadc"></div>
<div class="a" style="left:1239.0px;top:37.90px;width:1.2px;height:35.40px;background:#d7dadc"></div>
<div class="a" style="left:1324.0px;top:37.90px;width:1.2px;height:35.40px;background:#d7dadc"></div>
<div class="a" style="left:1384.0px;top:37.90px;width:1.2px;height:35.40px;background:#d7dadc"></div>
<div class="a" style="left:1453.8px;top:37.90px;width:1.2px;height:35.40px;background:#d7dadc"></div>
<div class="a" style="left:1584.6px;top:37.90px;width:1.2px;height:35.40px;background:#d7dadc"></div>
<svg style="left:5px;top:42.90px" width="19" height="19" viewBox="0 0 19 19" fill="none"><path d="M8.5 0.8H2A1.2 1.2 0 0 0 0.8 2V14.3A1.2 1.2 0 0 0 2 15.5H12A1.2 1.2 0 0 0 13.2 14.3V12.3" stroke="#1e6a96" stroke-width="1.5"/><path d="M3 4.3H7M3 7.3H6.2M3 10.3H8.5" stroke="#3f88b8" stroke-width="1.3"/><circle cx="11.6" cy="6.8" r="5" stroke="#d6a232" stroke-width="1.5"/><path d="M14.6 10.8L17.2 15.2" stroke="#d6a232" stroke-width="1.6"/></svg>
<div class="t" style="left:63.80000000000001px;top:42.63px;font-size:12.6px;color:#0866c6;font-weight:normal;-webkit-text-stroke:0.32px currentColor;">09/27 01:21:30</div>
<div class="t" style="left:163.3px;top:42.54px;font-size:12px;color:#0866c6;font-weight:normal;-webkit-text-stroke:0.32px currentColor;">end</div>
<div class="t" style="left:216.39999999999998px;top:42.54px;font-size:12px;color:#0866c6;font-weight:normal;-webkit-text-stroke:0.32px currentColor;">Inside</div>
<div class="t" style="left:300.6px;top:42.54px;font-size:12px;color:#0866c6;font-weight:normal;-webkit-text-stroke:0.32px currentColor;">Outside</div>
<div class="t" style="left:371.6px;top:42.54px;font-size:12px;color:#0866c6;font-weight:normal;-webkit-text-stroke:0.32px currentColor;">62.0.0.10</div>
<div class="t" style="left:458.70000000000005px;top:42.54px;font-size:12px;color:#0866c6;font-weight:normal;-webkit-text-stroke:0.32px currentColor;">no</div>
<div class="t" style="left:1179px;top:42.54px;font-size:12px;color:#0866c6;font-weight:normal;-webkit-text-stroke:0.32px currentColor;">80</div>
<div class="t" style="left:1245.6px;top:42.54px;font-size:12px;color:#0866c6;font-weight:normal;-webkit-text-stroke:0.32px currentColor;">ocsp</div>
<div class="t" style="left:1330.5px;top:42.54px;font-size:12px;color:#0866c6;font-weight:normal;-webkit-text-stroke:0.32px currentColor;">allow</div>
<div class="t" style="left:1390.3px;top:42.54px;font-size:12px;color:#0866c6;font-weight:normal;-webkit-text-stroke:0.32px currentColor;">Allow Web</div>
<div class="t" style="left:1390.3px;top:54.74px;font-size:12px;color:#0866c6;font-weight:normal;-webkit-text-stroke:0.32px currentColor;">Proxy</div>
<div class="t" style="left:1460px;top:42.54px;font-size:12px;color:#0866c6;font-weight:normal;-webkit-text-stroke:0.32px currentColor;">tcp-fin</div>
<div class="t" style="left:1591px;top:42.54px;font-size:12px;color:#0866c6;font-weight:normal;-webkit-text-stroke:0.32px currentColor;">1.9k</div>
<div class="a" style="left:0;top:73.80px;width:1635px;height:36.90px;background:#ffffff;border-bottom:1px solid #dfe3e6"></div>
<div class="a" style="left:30.0px;top:74.80px;width:1.2px;height:35.40px;background:#d7dadc"></div>
<div class="a" style="left:57.9px;top:74.80px;width:1.2px;height:35.40px;background:#d7dadc"></div>
<div class="a" style="left:156.8px;top:74.80px;width:1.2px;height:35.40px;background:#d7dadc"></div>
<div class="a" style="left:209.9px;top:74.80px;width:1.2px;height:35.40px;background:#d7dadc"></div>
<div class="a" style="left:293.9px;top:74.80px;width:1.2px;height:35.40px;background:#d7dadc"></div>
<div class="a" style="left:365.1px;top:74.80px;width:1.2px;height:35.40px;background:#d7dadc"></div>
<div class="a" style="left:452.1px;top:74.80px;width:1.2px;height:35.40px;background:#d7dadc"></div>
<div class="a" style="left:533.7px;top:74.80px;width:1.2px;height:35.40px;background:#d7dadc"></div>
<div class="a" style="left:624.8px;top:74.80px;width:1.2px;height:35.40px;background:#d7dadc"></div>
<div class="a" style="left:817.8px;top:74.80px;width:1.2px;height:35.40px;background:#d7dadc"></div>
<div class="a" style="left:1035.7px;top:74.80px;width:1.2px;height:35.40px;background:#d7dadc"></div>
<div class="a" style="left:1172.3px;top:74.80px;width:1.2px;height:35.40px;background:#d7dadc"></div>
<div class="a" style="left:1239.0px;top:74.80px;width:1.2px;height:35.40px;background:#d7dadc"></div>
<div class="a" style="left:1324.0px;top:74.80px;width:1.2px;height:35.40px;background:#d7dadc"></div>
<div class="a" style="left:1384.0px;top:74.80px;width:1.2px;height:35.40px;background:#d7dadc"></div>
<div class="a" style="left:1453.8px;top:74.80px;width:1.2px;height:35.40px;background:#d7dadc"></div>
<div class="a" style="left:1584.6px;top:74.80px;width:1.2px;height:35.40px;background:#d7dadc"></div>
<svg style="left:5px;top:79.80px" width="19" height="19" viewBox="0 0 19 19" fill="none"><path d="M8.5 0.8H2A1.2 1.2 0 0 0 0.8 2V14.3A1.2 1.2 0 0 0 2 15.5H12A1.2 1.2 0 0 0 13.2 14.3V12.3" stroke="#1e6a96" stroke-width="1.5"/><path d="M3 4.3H7M3 7.3H6.2M3 10.3H8.5" stroke="#3f88b8" stroke-width="1.3"/><circle cx="11.6" cy="6.8" r="5" stroke="#d6a232" stroke-width="1.5"/><path d="M14.6 10.8L17.2 15.2" stroke="#d6a232" stroke-width="1.6"/></svg>
<div class="t" style="left:63.80000000000001px;top:79.53px;font-size:12.6px;color:#0866c6;font-weight:normal;-webkit-text-stroke:0.32px currentColor;">09/27 01:21:30</div>
<div class="t" style="left:163.3px;top:79.44px;font-size:12px;color:#0866c6;font-weight:normal;-webkit-text-stroke:0.32px currentColor;">end</div>
<div class="t" style="left:216.39999999999998px;top:79.44px;font-size:12px;color:#0866c6;font-weight:normal;-webkit-text-stroke:0.32px currentColor;">Inside</div>
<div class="t" style="left:300.6px;top:79.44px;font-size:12px;color:#0866c6;font-weight:normal;-webkit-text-stroke:0.32px currentColor;">Outside</div>
<div class="t" style="left:371.6px;top:79.44px;font-size:12px;color:#0866c6;font-weight:normal;-webkit-text-stroke:0.32px currentColor;">62.0.0.10</div>
<div class="t" style="left:458.70000000000005px;top:79.44px;font-size:12px;color:#0866c6;font-weight:normal;-webkit-text-stroke:0.32px currentColor;">no</div>
<div class="t" style="left:1179px;top:79.44px;font-size:12px;color:#0866c6;font-weight:normal;-webkit-text-stroke:0.32px currentColor;">80</div>
<div class="t" style="left:1245.6px;top:79.44px;font-size:12px;color:#0866c6;font-weight:normal;-webkit-text-stroke:0.32px currentColor;">ocsp</div>
<div class="t" style="left:1330.5px;top:79.44px;font-size:12px;color:#0866c6;font-weight:normal;-webkit-text-stroke:0.32px currentColor;">allow</div>
<div class="t" style="left:1390.3px;top:79.44px;font-size:12px;color:#0866c6;font-weight:normal;-webkit-text-stroke:0.32px currentColor;">Allow Web</div>
<div class="t" style="left:1390.3px;top:91.64px;font-size:12px;color:#0866c6;font-weight:normal;-webkit-text-stroke:0.32px currentColor;">Proxy</div>
<div class="t" style="left:1460px;top:79.44px;font-size:12px;color:#0866c6;font-weight:normal;-webkit-text-stroke:0.32px currentColor;">tcp-fin</div>
<div class="t" style="left:1591px;top:79.44px;font-size:12px;color:#0866c6;font-weight:normal;-webkit-text-stroke:0.32px currentColor;">1.9k</div>
<div class="a" style="left:0;top:110.70px;width:1635px;height:36.90px;background:#ebf4f7;border-bottom:1px solid #dfe3e6"></div>
<div class="a" style="left:30.0px;top:111.70px;width:1.2px;height:35.40px;background:#d7dadc"></div>
<div class="a" style="left:57.9px;top:111.70px;width:1.2px;height:35.40px;background:#d7dadc"></div>
<div class="a" style="left:156.8px;top:111.70px;width:1.2px;height:35.40px;background:#d7dadc"></div>
<div class="a" style="left:209.9px;top:111.70px;width:1.2px;height:35.40px;background:#d7dadc"></div>
<div class="a" style="left:293.9px;top:111.70px;width:1.2px;height:35.40px;background:#d7dadc"></div>
<div class="a" style="left:365.1px;top:111.70px;width:1.2px;height:35.40px;background:#d7dadc"></div>
<div class="a" style="left:452.1px;top:111.70px;width:1.2px;height:35.40px;background:#d7dadc"></div>
<div class="a" style="left:533.7px;top:111.70px;width:1.2px;height:35.40px;background:#d7dadc"></div>
<div class="a" style="left:624.8px;top:111.70px;width:1.2px;height:35.40px;background:#d7dadc"></div>
<div class="a" style="left:817.8px;top:111.70px;width:1.2px;height:35.40px;background:#d7dadc"></div>
<div class="a" style="left:1035.7px;top:111.70px;width:1.2px;height:35.40px;background:#d7dadc"></div>
<div class="a" style="left:1172.3px;top:111.70px;width:1.2px;height:35.40px;background:#d7dadc"></div>
<div class="a" style="left:1239.0px;top:111.70px;width:1.2px;height:35.40px;background:#d7dadc"></div>
<div class="a" style="left:1324.0px;top:111.70px;width:1.2px;height:35.40px;background:#d7dadc"></div>
<div class="a" style="left:1384.0px;top:111.70px;width:1.2px;height:35.40px;background:#d7dadc"></div>
<div class="a" style="left:1453.8px;top:111.70px;width:1.2px;height:35.40px;background:#d7dadc"></div>
<div class="a" style="left:1584.6px;top:111.70px;width:1.2px;height:35.40px;background:#d7dadc"></div>
<svg style="left:5px;top:116.70px" width="19" height="19" viewBox="0 0 19 19" fill="none"><path d="M8.5 0.8H2A1.2 1.2 0 0 0 0.8 2V14.3A1.2 1.2 0 0 0 2 15.5H12A1.2 1.2 0 0 0 13.2 14.3V12.3" stroke="#1e6a96" stroke-width="1.5"/><path d="M3 4.3H7M3 7.3H6.2M3 10.3H8.5" stroke="#3f88b8" stroke-width="1.3"/><circle cx="11.6" cy="6.8" r="5" stroke="#d6a232" stroke-width="1.5"/><path d="M14.6 10.8L17.2 15.2" stroke="#d6a232" stroke-width="1.6"/></svg>
<div class="t" style="left:63.80000000000001px;top:116.43px;font-size:12.6px;color:#0866c6;font-weight:normal;-webkit-text-stroke:0.32px currentColor;">09/27 01:21:30</div>
<div class="t" style="left:163.3px;top:116.34px;font-size:12px;color:#0866c6;font-weight:normal;-webkit-text-stroke:0.32px currentColor;">end</div>
<div class="t" style="left:216.39999999999998px;top:116.34px;font-size:12px;color:#0866c6;font-weight:normal;-webkit-text-stroke:0.32px currentColor;">Inside</div>
<div class="t" style="left:300.6px;top:116.34px;font-size:12px;color:#0866c6;font-weight:normal;-webkit-text-stroke:0.32px currentColor;">Outside</div>
<div class="t" style="left:371.6px;top:116.34px;font-size:12px;color:#0866c6;font-weight:normal;-webkit-text-stroke:0.32px currentColor;">62.0.0.10</div>
<div class="t" style="left:458.70000000000005px;top:116.34px;font-size:12px;color:#0866c6;font-weight:normal;-webkit-text-stroke:0.32px currentColor;">no</div>
<div class="t" style="left:1179px;top:116.34px;font-size:12px;color:#0866c6;font-weight:normal;-webkit-text-stroke:0.32px currentColor;">80</div>
<div class="t" style="left:1245.6px;top:116.34px;font-size:12px;color:#0866c6;font-weight:normal;-webkit-text-stroke:0.32px currentColor;">ocsp</div>
<div class="t" style="left:1330.5px;top:116.34px;font-size:12px;color:#0866c6;font-weight:normal;-webkit-text-stroke:0.32px currentColor;">allow</div>
<div class="t" style="left:1390.3px;top:116.34px;font-size:12px;color:#0866c6;font-weight:normal;-webkit-text-stroke:0.32px currentColor;">Allow Web</div>
<div class="t" style="left:1390.3px;top:128.54px;font-size:12px;color:#0866c6;font-weight:normal;-webkit-text-stroke:0.32px currentColor;">Proxy</div>
<div class="t" style="left:1460px;top:116.34px;font-size:12px;color:#0866c6;font-weight:normal;-webkit-text-stroke:0.32px currentColor;">tcp-fin</div>
<div class="t" style="left:1591px;top:116.34px;font-size:12px;color:#0866c6;font-weight:normal;-webkit-text-stroke:0.32px currentColor;">2.0k</div>
<div class="a" style="left:0;top:147.60px;width:1635px;height:36.90px;background:#ffffff;border-bottom:1px solid #dfe3e6"></div>
<div class="a" style="left:30.0px;top:148.60px;width:1.2px;height:35.40px;background:#d7dadc"></div>
<div class="a" style="left:57.9px;top:148.60px;width:1.2px;height:35.40px;background:#d7dadc"></div>
<div class="a" style="left:156.8px;top:148.60px;width:1.2px;height:35.40px;background:#d7dadc"></div>
<div class="a" style="left:209.9px;top:148.60px;width:1.2px;height:35.40px;background:#d7dadc"></div>
<div class="a" style="left:293.9px;top:148.60px;width:1.2px;height:35.40px;background:#d7dadc"></div>
<div class="a" style="left:365.1px;top:148.60px;width:1.2px;height:35.40px;background:#d7dadc"></div>
<div class="a" style="left:452.1px;top:148.60px;width:1.2px;height:35.40px;background:#d7dadc"></div>
<div class="a" style="left:533.7px;top:148.60px;width:1.2px;height:35.40px;background:#d7dadc"></div>
<div class="a" style="left:624.8px;top:148.60px;width:1.2px;height:35.40px;background:#d7dadc"></div>
<div class="a" style="left:817.8px;top:148.60px;width:1.2px;height:35.40px;background:#d7dadc"></div>
<div class="a" style="left:1035.7px;top:148.60px;width:1.2px;height:35.40px;background:#d7dadc"></div>
<div class="a" style="left:1172.3px;top:148.60px;width:1.2px;height:35.40px;background:#d7dadc"></div>
<div class="a" style="left:1239.0px;top:148.60px;width:1.2px;height:35.40px;background:#d7dadc"></div>
<div class="a" style="left:1324.0px;top:148.60px;width:1.2px;height:35.40px;background:#d7dadc"></div>
<div class="a" style="left:1384.0px;top:148.60px;width:1.2px;height:35.40px;background:#d7dadc"></div>
<div class="a" style="left:1453.8px;top:148.60px;width:1.2px;height:35.40px;background:#d7dadc"></div>
<div class="a" style="left:1584.6px;top:148.60px;width:1.2px;height:35.40px;background:#d7dadc"></div>
<svg style="left:5px;top:153.60px" width="19" height="19" viewBox="0 0 19 19" fill="none"><path d="M8.5 0.8H2A1.2 1.2 0 0 0 0.8 2V14.3A1.2 1.2 0 0 0 2 15.5H12A1.2 1.2 0 0 0 13.2 14.3V12.3" stroke="#1e6a96" stroke-width="1.5"/><path d="M3 4.3H7M3 7.3H6.2M3 10.3H8.5" stroke="#3f88b8" stroke-width="1.3"/><circle cx="11.6" cy="6.8" r="5" stroke="#d6a232" stroke-width="1.5"/><path d="M14.6 10.8L17.2 15.2" stroke="#d6a232" stroke-width="1.6"/></svg>
<div class="t" style="left:63.80000000000001px;top:153.33px;font-size:12.6px;color:#0866c6;font-weight:normal;-webkit-text-stroke:0.32px currentColor;">09/27 01:21:30</div>
<div class="t" style="left:163.3px;top:153.24px;font-size:12px;color:#0866c6;font-weight:normal;-webkit-text-stroke:0.32px currentColor;">end</div>
<div class="t" style="left:216.39999999999998px;top:153.24px;font-size:12px;color:#0866c6;font-weight:normal;-webkit-text-stroke:0.32px currentColor;">Inside</div>
<div class="t" style="left:300.6px;top:153.24px;font-size:12px;color:#0866c6;font-weight:normal;-webkit-text-stroke:0.32px currentColor;">Outside</div>
<div class="t" style="left:371.6px;top:153.24px;font-size:12px;color:#0866c6;font-weight:normal;-webkit-text-stroke:0.32px currentColor;">62.0.0.10</div>
<div class="t" style="left:458.70000000000005px;top:153.24px;font-size:12px;color:#0866c6;font-weight:normal;-webkit-text-stroke:0.32px currentColor;">no</div>
<div class="t" style="left:1179px;top:153.24px;font-size:12px;color:#0866c6;font-weight:normal;-webkit-text-stroke:0.32px currentColor;">443</div>
<div class="t" style="left:1245.6px;top:153.24px;font-size:12px;color:#0866c6;font-weight:normal;-webkit-text-stroke:0.32px currentColor;">google-base</div>
<div class="t" style="left:1330.5px;top:153.24px;font-size:12px;color:#0866c6;font-weight:normal;-webkit-text-stroke:0.32px currentColor;">allow</div>
<div class="t" style="left:1390.3px;top:153.24px;font-size:12px;color:#0866c6;font-weight:normal;-webkit-text-stroke:0.32px currentColor;">Allow Web</div>
<div class="t" style="left:1390.3px;top:165.44px;font-size:12px;color:#0866c6;font-weight:normal;-webkit-text-stroke:0.32px currentColor;">Proxy</div>
<div class="t" style="left:1460px;top:153.24px;font-size:12px;color:#0866c6;font-weight:normal;-webkit-text-stroke:0.32px currentColor;">tcp-fin</div>
<div class="t" style="left:1591px;top:153.24px;font-size:12px;color:#0866c6;font-weight:normal;-webkit-text-stroke:0.32px currentColor;">5.3k</div>
<div class="a" style="left:0;top:184.50px;width:1635px;height:36.90px;background:#ebf4f7;border-bottom:1px solid #dfe3e6"></div>
<div class="a" style="left:30.0px;top:185.50px;width:1.2px;height:35.40px;background:#d7dadc"></div>
<div class="a" style="left:57.9px;top:185.50px;width:1.2px;height:35.40px;background:#d7dadc"></div>
<div class="a" style="left:156.8px;top:185.50px;width:1.2px;height:35.40px;background:#d7dadc"></div>
<div class="a" style="left:209.9px;top:185.50px;width:1.2px;height:35.40px;background:#d7dadc"></div>
<div class="a" style="left:293.9px;top:185.50px;width:1.2px;height:35.40px;background:#d7dadc"></div>
<div class="a" style="left:365.1px;top:185.50px;width:1.2px;height:35.40px;background:#d7dadc"></div>
<div class="a" style="left:452.1px;top:185.50px;width:1.2px;height:35.40px;background:#d7dadc"></div>
<div class="a" style="left:533.7px;top:185.50px;width:1.2px;height:35.40px;background:#d7dadc"></div>
<div class="a" style="left:624.8px;top:185.50px;width:1.2px;height:35.40px;background:#d7dadc"></div>
<div class="a" style="left:817.8px;top:185.50px;width:1.2px;height:35.40px;background:#d7dadc"></div>
<div class="a" style="left:1035.7px;top:185.50px;width:1.2px;height:35.40px;background:#d7dadc"></div>
<div class="a" style="left:1172.3px;top:185.50px;width:1.2px;height:35.40px;background:#d7dadc"></div>
<div class="a" style="left:1239.0px;top:185.50px;width:1.2px;height:35.40px;background:#d7dadc"></div>
<div class="a" style="left:1324.0px;top:185.50px;width:1.2px;height:35.40px;background:#d7dadc"></div>
<div class="a" style="left:1384.0px;top:185.50px;width:1.2px;height:35.40px;background:#d7dadc"></div>
<div class="a" style="left:1453.8px;top:185.50px;width:1.2px;height:35.40px;background:#d7dadc"></div>
<div class="a" style="left:1584.6px;top:185.50px;width:1.2px;height:35.40px;background:#d7dadc"></div>
<svg style="left:5px;top:190.50px" width="19" height="19" viewBox="0 0 19 19" fill="none"><path d="M8.5 0.8H2A1.2 1.2 0 0 0 0.8 2V14.3A1.2 1.2 0 0 0 2 15.5H12A1.2 1.2 0 0 0 13.2 14.3V12.3" stroke="#1e6a96" stroke-width="1.5"/><path d="M3 4.3H7M3 7.3H6.2M3 10.3H8.5" stroke="#3f88b8" stroke-width="1.3"/><circle cx="11.6" cy="6.8" r="5" stroke="#d6a232" stroke-width="1.5"/><path d="M14.6 10.8L17.2 15.2" stroke="#d6a232" stroke-width="1.6"/></svg>
<div class="t" style="left:63.80000000000001px;top:190.23px;font-size:12.6px;color:#0866c6;font-weight:normal;-webkit-text-stroke:0.32px currentColor;">09/27 01:21:05</div>
<div class="t" style="left:163.3px;top:190.14px;font-size:12px;color:#0866c6;font-weight:normal;-webkit-text-stroke:0.32px currentColor;">end</div>
<div class="t" style="left:216.39999999999998px;top:190.14px;font-size:12px;color:#0866c6;font-weight:normal;-webkit-text-stroke:0.32px currentColor;">Inside</div>
<div class="t" style="left:300.6px;top:190.14px;font-size:12px;color:#0866c6;font-weight:normal;-webkit-text-stroke:0.32px currentColor;">Outside</div>
<div class="t" style="left:371.6px;top:190.14px;font-size:12px;color:#0866c6;font-weight:normal;-webkit-text-stroke:0.32px currentColor;">62.0.0.10</div>
<div class="t" style="left:458.70000000000005px;top:190.14px;font-size:12px;color:#0866c6;font-weight:normal;-webkit-text-stroke:0.32px currentColor;">no</div>
<div class="t" style="left:1179px;top:190.14px;font-size:12px;color:#0866c6;font-weight:normal;-webkit-text-stroke:0.32px currentColor;">443</div>
<div class="t" style="left:1245.6px;top:190.14px;font-size:12px;color:#0866c6;font-weight:normal;-webkit-text-stroke:0.32px currentColor;">incomplete</div>
<div class="t" style="left:1330.5px;top:190.14px;font-size:12px;color:#0866c6;font-weight:normal;-webkit-text-stroke:0.32px currentColor;">allow</div>
<div class="t" style="left:1390.3px;top:190.14px;font-size:12px;color:#0866c6;font-weight:normal;-webkit-text-stroke:0.32px currentColor;">Allow Web</div>
<div class="t" style="left:1390.3px;top:202.34px;font-size:12px;color:#0866c6;font-weight:normal;-webkit-text-stroke:0.32px currentColor;">Proxy</div>
<div class="t" style="left:1460px;top:190.14px;font-size:12px;color:#0866c6;font-weight:normal;-webkit-text-stroke:0.32px currentColor;">tcp-fin</div>
<div class="t" style="left:1591px;top:190.14px;font-size:12px;color:#0866c6;font-weight:normal;-webkit-text-stroke:0.32px currentColor;">412</div>
<div class="a" style="left:0;top:221.40px;width:1635px;height:36.90px;background:#ffffff;border-bottom:1px solid #dfe3e6"></div>
<div class="a" style="left:30.0px;top:222.40px;width:1.2px;height:35.40px;background:#d7dadc"></div>
<div class="a" style="left:57.9px;top:222.40px;width:1.2px;height:35.40px;background:#d7dadc"></div>
<div class="a" style="left:156.8px;top:222.40px;width:1.2px;height:35.40px;background:#d7dadc"></div>
<div class="a" style="left:209.9px;top:222.40px;width:1.2px;height:35.40px;background:#d7dadc"></div>
<div class="a" style="left:293.9px;top:222.40px;width:1.2px;height:35.40px;background:#d7dadc"></div>
<div class="a" style="left:365.1px;top:222.40px;width:1.2px;height:35.40px;background:#d7dadc"></div>
<div class="a" style="left:452.1px;top:222.40px;width:1.2px;height:35.40px;background:#d7dadc"></div>
<div class="a" style="left:533.7px;top:222.40px;width:1.2px;height:35.40px;background:#d7dadc"></div>
<div class="a" style="left:624.8px;top:222.40px;width:1.2px;height:35.40px;background:#d7dadc"></div>
<div class="a" style="left:817.8px;top:222.40px;width:1.2px;height:35.40px;background:#d7dadc"></div>
<div class="a" style="left:1035.7px;top:222.40px;width:1.2px;height:35.40px;background:#d7dadc"></div>
<div class="a" style="left:1172.3px;top:222.40px;width:1.2px;height:35.40px;background:#d7dadc"></div>
<div class="a" style="left:1239.0px;top:222.40px;width:1.2px;height:35.40px;background:#d7dadc"></div>
<div class="a" style="left:1324.0px;top:222.40px;width:1.2px;height:35.40px;background:#d7dadc"></div>
<div class="a" style="left:1384.0px;top:222.40px;width:1.2px;height:35.40px;background:#d7dadc"></div>
<div class="a" style="left:1453.8px;top:222.40px;width:1.2px;height:35.40px;background:#d7dadc"></div>
<div class="a" style="left:1584.6px;top:222.40px;width:1.2px;height:35.40px;background:#d7dadc"></div>
<svg style="left:5px;top:227.40px" width="19" height="19" viewBox="0 0 19 19" fill="none"><path d="M8.5 0.8H2A1.2 1.2 0 0 0 0.8 2V14.3A1.2 1.2 0 0 0 2 15.5H12A1.2 1.2 0 0 0 13.2 14.3V12.3" stroke="#1e6a96" stroke-width="1.5"/><path d="M3 4.3H7M3 7.3H6.2M3 10.3H8.5" stroke="#3f88b8" stroke-width="1.3"/><circle cx="11.6" cy="6.8" r="5" stroke="#d6a232" stroke-width="1.5"/><path d="M14.6 10.8L17.2 15.2" stroke="#d6a232" stroke-width="1.6"/></svg>
<div class="t" style="left:63.80000000000001px;top:227.13px;font-size:12.6px;color:#0866c6;font-weight:normal;-webkit-text-stroke:0.32px currentColor;">09/27 01:21:05</div>
<div class="t" style="left:163.3px;top:227.04px;font-size:12px;color:#0866c6;font-weight:normal;-webkit-text-stroke:0.32px currentColor;">end</div>
<div class="t" style="left:216.39999999999998px;top:227.04px;font-size:12px;color:#0866c6;font-weight:normal;-webkit-text-stroke:0.32px currentColor;">Inside</div>
<div class="t" style="left:300.6px;top:227.04px;font-size:12px;color:#0866c6;font-weight:normal;-webkit-text-stroke:0.32px currentColor;">Outside</div>
<div class="t" style="left:371.6px;top:227.04px;font-size:12px;color:#0866c6;font-weight:normal;-webkit-text-stroke:0.32px currentColor;">62.0.0.10</div>
<div class="t" style="left:458.70000000000005px;top:227.04px;font-size:12px;color:#0866c6;font-weight:normal;-webkit-text-stroke:0.32px currentColor;">no</div>
<div class="t" style="left:1179px;top:227.04px;font-size:12px;color:#0866c6;font-weight:normal;-webkit-text-stroke:0.32px currentColor;">443</div>
<div class="t" style="left:1245.6px;top:227.04px;font-size:12px;color:#0866c6;font-weight:normal;-webkit-text-stroke:0.32px currentColor;">google-base</div>
<div class="t" style="left:1330.5px;top:227.04px;font-size:12px;color:#0866c6;font-weight:normal;-webkit-text-stroke:0.32px currentColor;">allow</div>
<div class="t" style="left:1390.3px;top:227.04px;font-size:12px;color:#0866c6;font-weight:normal;-webkit-text-stroke:0.32px currentColor;">Allow Web</div>
<div class="t" style="left:1390.3px;top:239.24px;font-size:12px;color:#0866c6;font-weight:normal;-webkit-text-stroke:0.32px currentColor;">Proxy</div>
<div class="t" style="left:1460px;top:227.04px;font-size:12px;color:#0866c6;font-weight:normal;-webkit-text-stroke:0.32px currentColor;">tcp-rst-from-server</div>
<div class="t" style="left:1591px;top:227.04px;font-size:12px;color:#0866c6;font-weight:normal;-webkit-text-stroke:0.32px currentColor;">7.1k</div>
<div class="a" style="left:0;top:258.30px;width:1635px;height:36.90px;background:#ebf4f7;border-bottom:1px solid #dfe3e6"></div>
<div class="a" style="left:30.0px;top:259.30px;width:1.2px;height:35.40px;background:#d7dadc"></div>
<div class="a" style="left:57.9px;top:259.30px;width:1.2px;height:35.40px;background:#d7dadc"></div>
<div class="a" style="left:156.8px;top:259.30px;width:1.2px;height:35.40px;background:#d7dadc"></div>
<div class="a" style="left:209.9px;top:259.30px;width:1.2px;height:35.40px;background:#d7dadc"></div>
<div class="a" style="left:293.9px;top:259.30px;width:1.2px;height:35.40px;background:#d7dadc"></div>
<div class="a" style="left:365.1px;top:259.30px;width:1.2px;height:35.40px;background:#d7dadc"></div>
<div class="a" style="left:452.1px;top:259.30px;width:1.2px;height:35.40px;background:#d7dadc"></div>
<div class="a" style="left:533.7px;top:259.30px;width:1.2px;height:35.40px;background:#d7dadc"></div>
<div class="a" style="left:624.8px;top:259.30px;width:1.2px;height:35.40px;background:#d7dadc"></div>
<div class="a" style="left:817.8px;top:259.30px;width:1.2px;height:35.40px;background:#d7dadc"></div>
<div class="a" style="left:1035.7px;top:259.30px;width:1.2px;height:35.40px;background:#d7dadc"></div>
<div class="a" style="left:1172.3px;top:259.30px;width:1.2px;height:35.40px;background:#d7dadc"></div>
<div class="a" style="left:1239.0px;top:259.30px;width:1.2px;height:35.40px;background:#d7dadc"></div>
<div class="a" style="left:1324.0px;top:259.30px;width:1.2px;height:35.40px;background:#d7dadc"></div>
<div class="a" style="left:1384.0px;top:259.30px;width:1.2px;height:35.40px;background:#d7dadc"></div>
<div class="a" style="left:1453.8px;top:259.30px;width:1.2px;height:35.40px;background:#d7dadc"></div>
<div class="a" style="left:1584.6px;top:259.30px;width:1.2px;height:35.40px;background:#d7dadc"></div>
<svg style="left:5px;top:264.30px" width="19" height="19" viewBox="0 0 19 19" fill="none"><path d="M8.5 0.8H2A1.2 1.2 0 0 0 0.8 2V14.3A1.2 1.2 0 0 0 2 15.5H12A1.2 1.2 0 0 0 13.2 14.3V12.3" stroke="#1e6a96" stroke-width="1.5"/><path d="M3 4.3H7M3 7.3H6.2M3 10.3H8.5" stroke="#3f88b8" stroke-width="1.3"/><circle cx="11.6" cy="6.8" r="5" stroke="#d6a232" stroke-width="1.5"/><path d="M14.6 10.8L17.2 15.2" stroke="#d6a232" stroke-width="1.6"/></svg>
<div class="t" style="left:63.80000000000001px;top:264.03px;font-size:12.6px;color:#0866c6;font-weight:normal;-webkit-text-stroke:0.32px currentColor;">09/27 01:20:55</div>
<div class="t" style="left:163.3px;top:263.94px;font-size:12px;color:#0866c6;font-weight:normal;-webkit-text-stroke:0.32px currentColor;">drop</div>
<div class="t" style="left:216.39999999999998px;top:263.94px;font-size:12px;color:#0866c6;font-weight:normal;-webkit-text-stroke:0.32px currentColor;">Inside</div>
<div class="t" style="left:300.6px;top:263.94px;font-size:12px;color:#0866c6;font-weight:normal;-webkit-text-stroke:0.32px currentColor;">Outside</div>
<div class="t" style="left:371.6px;top:263.94px;font-size:12px;color:#0866c6;font-weight:normal;-webkit-text-stroke:0.32px currentColor;">62.0.0.151</div>
<div class="t" style="left:458.70000000000005px;top:263.94px;font-size:12px;color:#0866c6;font-weight:normal;-webkit-text-stroke:0.32px currentColor;">no</div>
<div class="t" style="left:1179px;top:263.94px;font-size:12px;color:#0866c6;font-weight:normal;-webkit-text-stroke:0.32px currentColor;">443</div>
<div class="t" style="left:1245.6px;top:263.94px;font-size:12px;color:#0866c6;font-weight:normal;-webkit-text-stroke:0.32px currentColor;">not-</div>
<div class="t" style="left:1245.6px;top:276.14px;font-size:12px;color:#0866c6;font-weight:normal;-webkit-text-stroke:0.32px currentColor;">applicable</div>
<div class="t" style="left:1330.5px;top:263.94px;font-size:12px;color:#0866c6;font-weight:normal;-webkit-text-stroke:0.32px currentColor;">deny</div>
<div class="t" style="left:1390.3px;top:263.94px;font-size:12px;color:#0866c6;font-weight:normal;-webkit-text-stroke:0.32px currentColor;">Block Web</div>
<div class="t" style="left:1460px;top:263.94px;font-size:12px;color:#0866c6;font-weight:normal;-webkit-text-stroke:0.32px currentColor;">policy-deny</div>
<div class="t" style="left:1591px;top:263.94px;font-size:12px;color:#0866c6;font-weight:normal;-webkit-text-stroke:0.32px currentColor;">0</div>
<div class="a" style="left:0;top:295.20px;width:1635px;height:36.90px;background:#ffffff;border-bottom:1px solid #dfe3e6"></div>
<div class="a" style="left:30.0px;top:296.20px;width:1.2px;height:35.40px;background:#d7dadc"></div>
<div class="a" style="left:57.9px;top:296.20px;width:1.2px;height:35.40px;background:#d7dadc"></div>
<div class="a" style="left:156.8px;top:296.20px;width:1.2px;height:35.40px;background:#d7dadc"></div>
<div class="a" style="left:209.9px;top:296.20px;width:1.2px;height:35.40px;background:#d7dadc"></div>
<div class="a" style="left:293.9px;top:296.20px;width:1.2px;height:35.40px;background:#d7dadc"></div>
<div class="a" style="left:365.1px;top:296.20px;width:1.2px;height:35.40px;background:#d7dadc"></div>
<div class="a" style="left:452.1px;top:296.20px;width:1.2px;height:35.40px;background:#d7dadc"></div>
<div class="a" style="left:533.7px;top:296.20px;width:1.2px;height:35.40px;background:#d7dadc"></div>
<div class="a" style="left:624.8px;top:296.20px;width:1.2px;height:35.40px;background:#d7dadc"></div>
<div class="a" style="left:817.8px;top:296.20px;width:1.2px;height:35.40px;background:#d7dadc"></div>
<div class="a" style="left:1035.7px;top:296.20px;width:1.2px;height:35.40px;background:#d7dadc"></div>
<div class="a" style="left:1172.3px;top:296.20px;width:1.2px;height:35.40px;background:#d7dadc"></div>
<div class="a" style="left:1239.0px;top:296.20px;width:1.2px;height:35.40px;background:#d7dadc"></div>
<div class="a" style="left:1324.0px;top:296.20px;width:1.2px;height:35.40px;background:#d7dadc"></div>
<div class="a" style="left:1384.0px;top:296.20px;width:1.2px;height:35.40px;background:#d7dadc"></div>
<div class="a" style="left:1453.8px;top:296.20px;width:1.2px;height:35.40px;background:#d7dadc"></div>
<div class="a" style="left:1584.6px;top:296.20px;width:1.2px;height:35.40px;background:#d7dadc"></div>
<svg style="left:5px;top:301.20px" width="19" height="19" viewBox="0 0 19 19" fill="none"><path d="M8.5 0.8H2A1.2 1.2 0 0 0 0.8 2V14.3A1.2 1.2 0 0 0 2 15.5H12A1.2 1.2 0 0 0 13.2 14.3V12.3" stroke="#1e6a96" stroke-width="1.5"/><path d="M3 4.3H7M3 7.3H6.2M3 10.3H8.5" stroke="#3f88b8" stroke-width="1.3"/><circle cx="11.6" cy="6.8" r="5" stroke="#d6a232" stroke-width="1.5"/><path d="M14.6 10.8L17.2 15.2" stroke="#d6a232" stroke-width="1.6"/></svg>
<div class="t" style="left:63.80000000000001px;top:300.93px;font-size:12.6px;color:#0866c6;font-weight:normal;-webkit-text-stroke:0.32px currentColor;">09/27 01:20:50</div>
<div class="t" style="left:163.3px;top:300.84px;font-size:12px;color:#0866c6;font-weight:normal;-webkit-text-stroke:0.32px currentColor;">drop</div>
<div class="t" style="left:216.39999999999998px;top:300.84px;font-size:12px;color:#0866c6;font-weight:normal;-webkit-text-stroke:0.32px currentColor;">Inside</div>
<div class="t" style="left:300.6px;top:300.84px;font-size:12px;color:#0866c6;font-weight:normal;-webkit-text-stroke:0.32px currentColor;">Outside</div>
<div class="t" style="left:371.6px;top:300.84px;font-size:12px;color:#0866c6;font-weight:normal;-webkit-text-stroke:0.32px currentColor;">62.0.0.151</div>
<div class="t" style="left:458.70000000000005px;top:300.84px;font-size:12px;color:#0866c6;font-weight:normal;-webkit-text-stroke:0.32px currentColor;">no</div>
<div class="t" style="left:1179px;top:300.84px;font-size:12px;color:#0866c6;font-weight:normal;-webkit-text-stroke:0.32px currentColor;">443</div>
<div class="t" style="left:1245.6px;top:300.84px;font-size:12px;color:#0866c6;font-weight:normal;-webkit-text-stroke:0.32px currentColor;">not-</div>
<div class="t" style="left:1245.6px;top:313.04px;font-size:12px;color:#0866c6;font-weight:normal;-webkit-text-stroke:0.32px currentColor;">applicable</div>
<div class="t" style="left:1330.5px;top:300.84px;font-size:12px;color:#0866c6;font-weight:normal;-webkit-text-stroke:0.32px currentColor;">deny</div>
<div class="t" style="left:1390.3px;top:300.84px;font-size:12px;color:#0866c6;font-weight:normal;-webkit-text-stroke:0.32px currentColor;">Block Web</div>
<div class="t" style="left:1460px;top:300.84px;font-size:12px;color:#0866c6;font-weight:normal;-webkit-text-stroke:0.32px currentColor;">policy-deny</div>
<div class="t" style="left:1591px;top:300.84px;font-size:12px;color:#0866c6;font-weight:normal;-webkit-text-stroke:0.32px currentColor;">0</div>
<div class="a" style="left:0;top:332.10px;width:1635px;height:36.90px;background:#ebf4f7;border-bottom:1px solid #dfe3e6"></div>
<div class="a" style="left:30.0px;top:333.10px;width:1.2px;height:35.40px;background:#d7dadc"></div>
<div class="a" style="left:57.9px;top:333.10px;width:1.2px;height:35.40px;background:#d7dadc"></div>
<div class="a" style="left:156.8px;top:333.10px;width:1.2px;height:35.40px;background:#d7dadc"></div>
<div class="a" style="left:209.9px;top:333.10px;width:1.2px;height:35.40px;background:#d7dadc"></div>
<div class="a" style="left:293.9px;top:333.10px;width:1.2px;height:35.40px;background:#d7dadc"></div>
<div class="a" style="left:365.1px;top:333.10px;width:1.2px;height:35.40px;background:#d7dadc"></div>
<div class="a" style="left:452.1px;top:333.10px;width:1.2px;height:35.40px;background:#d7dadc"></div>
<div class="a" style="left:533.7px;top:333.10px;width:1.2px;height:35.40px;background:#d7dadc"></div>
<div class="a" style="left:624.8px;top:333.10px;width:1.2px;height:35.40px;background:#d7dadc"></div>
<div class="a" style="left:817.8px;top:333.10px;width:1.2px;height:35.40px;background:#d7dadc"></div>
<div class="a" style="left:1035.7px;top:333.10px;width:1.2px;height:35.40px;background:#d7dadc"></div>
<div class="a" style="left:1172.3px;top:333.10px;width:1.2px;height:35.40px;background:#d7dadc"></div>
<div class="a" style="left:1239.0px;top:333.10px;width:1.2px;height:35.40px;background:#d7dadc"></div>
<div class="a" style="left:1324.0px;top:333.10px;width:1.2px;height:35.40px;background:#d7dadc"></div>
<div class="a" style="left:1384.0px;top:333.10px;width:1.2px;height:35.40px;background:#d7dadc"></div>
<div class="a" style="left:1453.8px;top:333.10px;width:1.2px;height:35.40px;background:#d7dadc"></div>
<div class="a" style="left:1584.6px;top:333.10px;width:1.2px;height:35.40px;background:#d7dadc"></div>
<svg style="left:5px;top:338.10px" width="19" height="19" viewBox="0 0 19 19" fill="none"><path d="M8.5 0.8H2A1.2 1.2 0 0 0 0.8 2V14.3A1.2 1.2 0 0 0 2 15.5H12A1.2 1.2 0 0 0 13.2 14.3V12.3" stroke="#1e6a96" stroke-width="1.5"/><path d="M3 4.3H7M3 7.3H6.2M3 10.3H8.5" stroke="#3f88b8" stroke-width="1.3"/><circle cx="11.6" cy="6.8" r="5" stroke="#d6a232" stroke-width="1.5"/><path d="M14.6 10.8L17.2 15.2" stroke="#d6a232" stroke-width="1.6"/></svg>
<div class="t" style="left:63.80000000000001px;top:337.83px;font-size:12.6px;color:#0866c6;font-weight:normal;-webkit-text-stroke:0.32px currentColor;">09/27 01:20:45</div>
<div class="t" style="left:163.3px;top:337.74px;font-size:12px;color:#0866c6;font-weight:normal;-webkit-text-stroke:0.32px currentColor;">drop</div>
<div class="t" style="left:216.39999999999998px;top:337.74px;font-size:12px;color:#0866c6;font-weight:normal;-webkit-text-stroke:0.32px currentColor;">Inside</div>
<div class="t" style="left:300.6px;top:337.74px;font-size:12px;color:#0866c6;font-weight:normal;-webkit-text-stroke:0.32px currentColor;">Outside</div>
<div class="t" style="left:371.6px;top:337.74px;font-size:12px;color:#0866c6;font-weight:normal;-webkit-text-stroke:0.32px currentColor;">62.0.0.151</div>
<div class="t" style="left:458.70000000000005px;top:337.74px;font-size:12px;color:#0866c6;font-weight:normal;-webkit-text-stroke:0.32px currentColor;">no</div>
<div class="t" style="left:1179px;top:337.74px;font-size:12px;color:#0866c6;font-weight:normal;-webkit-text-stroke:0.32px currentColor;">443</div>
<div class="t" style="left:1245.6px;top:337.74px;font-size:12px;color:#0866c6;font-weight:normal;-webkit-text-stroke:0.32px currentColor;">not-</div>
<div class="t" style="left:1245.6px;top:349.94px;font-size:12px;color:#0866c6;font-weight:normal;-webkit-text-stroke:0.32px currentColor;">applicable</div>
<div class="t" style="left:1330.5px;top:337.74px;font-size:12px;color:#0866c6;font-weight:normal;-webkit-text-stroke:0.32px currentColor;">deny</div>
<div class="t" style="left:1390.3px;top:337.74px;font-size:12px;color:#0866c6;font-weight:normal;-webkit-text-stroke:0.32px currentColor;">Block Web</div>
<div class="t" style="left:1460px;top:337.74px;font-size:12px;color:#0866c6;font-weight:normal;-webkit-text-stroke:0.32px currentColor;">policy-deny</div>
<div class="t" style="left:1591px;top:337.74px;font-size:12px;color:#0866c6;font-weight:normal;-webkit-text-stroke:0.32px currentColor;">0</div>
<div class="a" style="left:0;top:369.00px;width:1635px;height:36.90px;background:#ffffff;border-bottom:1px solid #dfe3e6"></div>
<div class="a" style="left:30.0px;top:370.00px;width:1.2px;height:35.40px;background:#d7dadc"></div>
<div class="a" style="left:57.9px;top:370.00px;width:1.2px;height:35.40px;background:#d7dadc"></div>
<div class="a" style="left:156.8px;top:370.00px;width:1.2px;height:35.40px;background:#d7dadc"></div>
<div class="a" style="left:209.9px;top:370.00px;width:1.2px;height:35.40px;background:#d7dadc"></div>
<div class="a" style="left:293.9px;top:370.00px;width:1.2px;height:35.40px;background:#d7dadc"></div>
<div class="a" style="left:365.1px;top:370.00px;width:1.2px;height:35.40px;background:#d7dadc"></div>
<div class="a" style="left:452.1px;top:370.00px;width:1.2px;height:35.40px;background:#d7dadc"></div>
<div class="a" style="left:533.7px;top:370.00px;width:1.2px;height:35.40px;background:#d7dadc"></div>
<div class="a" style="left:624.8px;top:370.00px;width:1.2px;height:35.40px;background:#d7dadc"></div>
<div class="a" style="left:817.8px;top:370.00px;width:1.2px;height:35.40px;background:#d7dadc"></div>
<div class="a" style="left:1035.7px;top:370.00px;width:1.2px;height:35.40px;background:#d7dadc"></div>
<div class="a" style="left:1172.3px;top:370.00px;width:1.2px;height:35.40px;background:#d7dadc"></div>
<div class="a" style="left:1239.0px;top:370.00px;width:1.2px;height:35.40px;background:#d7dadc"></div>
<div class="a" style="left:1324.0px;top:370.00px;width:1.2px;height:35.40px;background:#d7dadc"></div>
<div class="a" style="left:1384.0px;top:370.00px;width:1.2px;height:35.40px;background:#d7dadc"></div>
<div class="a" style="left:1453.8px;top:370.00px;width:1.2px;height:35.40px;background:#d7dadc"></div>
<div class="a" style="left:1584.6px;top:370.00px;width:1.2px;height:35.40px;background:#d7dadc"></div>
<svg style="left:5px;top:375.00px" width="19" height="19" viewBox="0 0 19 19" fill="none"><path d="M8.5 0.8H2A1.2 1.2 0 0 0 0.8 2V14.3A1.2 1.2 0 0 0 2 15.5H12A1.2 1.2 0 0 0 13.2 14.3V12.3" stroke="#1e6a96" stroke-width="1.5"/><path d="M3 4.3H7M3 7.3H6.2M3 10.3H8.5" stroke="#3f88b8" stroke-width="1.3"/><circle cx="11.6" cy="6.8" r="5" stroke="#d6a232" stroke-width="1.5"/><path d="M14.6 10.8L17.2 15.2" stroke="#d6a232" stroke-width="1.6"/></svg>
<div class="t" style="left:63.80000000000001px;top:374.73px;font-size:12.6px;color:#0866c6;font-weight:normal;-webkit-text-stroke:0.32px currentColor;">09/27 01:20:35</div>
<div class="t" style="left:163.3px;top:374.64px;font-size:12px;color:#0866c6;font-weight:normal;-webkit-text-stroke:0.32px currentColor;">drop</div>
<div class="t" style="left:216.39999999999998px;top:374.64px;font-size:12px;color:#0866c6;font-weight:normal;-webkit-text-stroke:0.32px currentColor;">Inside</div>
<div class="t" style="left:300.6px;top:374.64px;font-size:12px;color:#0866c6;font-weight:normal;-webkit-text-stroke:0.32px currentColor;">Outside</div>
<div class="t" style="left:371.6px;top:374.64px;font-size:12px;color:#0866c6;font-weight:normal;-webkit-text-stroke:0.32px currentColor;">62.0.0.151</div>
<div class="t" style="left:458.70000000000005px;top:374.64px;font-size:12px;color:#0866c6;font-weight:normal;-webkit-text-stroke:0.32px currentColor;">no</div>
<div class="t" style="left:1179px;top:374.64px;font-size:12px;color:#0866c6;font-weight:normal;-webkit-text-stroke:0.32px currentColor;">443</div>
<div class="t" style="left:1245.6px;top:374.64px;font-size:12px;color:#0866c6;font-weight:normal;-webkit-text-stroke:0.32px currentColor;">not-</div>
<div class="t" style="left:1245.6px;top:386.84px;font-size:12px;color:#0866c6;font-weight:normal;-webkit-text-stroke:0.32px currentColor;">applicable</div>
<div class="t" style="left:1330.5px;top:374.64px;font-size:12px;color:#0866c6;font-weight:normal;-webkit-text-stroke:0.32px currentColor;">deny</div>
<div class="t" style="left:1390.3px;top:374.64px;font-size:12px;color:#0866c6;font-weight:normal;-webkit-text-stroke:0.32px currentColor;">Block Web</div>
<div class="t" style="left:1460px;top:374.64px;font-size:12px;color:#0866c6;font-weight:normal;-webkit-text-stroke:0.32px currentColor;">policy-deny</div>
<div class="t" style="left:1591px;top:374.64px;font-size:12px;color:#0866c6;font-weight:normal;-webkit-text-stroke:0.32px currentColor;">0</div>
<div class="a" style="left:0;top:405.90px;width:1635px;height:36.90px;background:#ebf4f7;border-bottom:1px solid #dfe3e6"></div>
<div class="a" style="left:30.0px;top:406.90px;width:1.2px;height:35.40px;background:#d7dadc"></div>
<div class="a" style="left:57.9px;top:406.90px;width:1.2px;height:35.40px;background:#d7dadc"></div>
<div class="a" style="left:156.8px;top:406.90px;width:1.2px;height:35.40px;background:#d7dadc"></div>
<div class="a" style="left:209.9px;top:406.90px;width:1.2px;height:35.40px;background:#d7dadc"></div>
<div class="a" style="left:293.9px;top:406.90px;width:1.2px;height:35.40px;background:#d7dadc"></div>
<div class="a" style="left:365.1px;top:406.90px;width:1.2px;height:35.40px;background:#d7dadc"></div>
<div class="a" style="left:452.1px;top:406.90px;width:1.2px;height:35.40px;background:#d7dadc"></div>
<div class="a" style="left:533.7px;top:406.90px;width:1.2px;height:35.40px;background:#d7dadc"></div>
<div class="a" style="left:624.8px;top:406.90px;width:1.2px;height:35.40px;background:#d7dadc"></div>
<div class="a" style="left:817.8px;top:406.90px;width:1.2px;height:35.40px;background:#d7dadc"></div>
<div class="a" style="left:1035.7px;top:406.90px;width:1.2px;height:35.40px;background:#d7dadc"></div>
<div class="a" style="left:1172.3px;top:406.90px;width:1.2px;height:35.40px;background:#d7dadc"></div>
<div class="a" style="left:1239.0px;top:406.90px;width:1.2px;height:35.40px;background:#d7dadc"></div>
<div class="a" style="left:1324.0px;top:406.90px;width:1.2px;height:35.40px;background:#d7dadc"></div>
<div class="a" style="left:1384.0px;top:406.90px;width:1.2px;height:35.40px;background:#d7dadc"></div>
<div class="a" style="left:1453.8px;top:406.90px;width:1.2px;height:35.40px;background:#d7dadc"></div>
<div class="a" style="left:1584.6px;top:406.90px;width:1.2px;height:35.40px;background:#d7dadc"></div>
<svg style="left:5px;top:411.90px" width="19" height="19" viewBox="0 0 19 19" fill="none"><path d="M8.5 0.8H2A1.2 1.2 0 0 0 0.8 2V14.3A1.2 1.2 0 0 0 2 15.5H12A1.2 1.2 0 0 0 13.2 14.3V12.3" stroke="#1e6a96" stroke-width="1.5"/><path d="M3 4.3H7M3 7.3H6.2M3 10.3H8.5" stroke="#3f88b8" stroke-width="1.3"/><circle cx="11.6" cy="6.8" r="5" stroke="#d6a232" stroke-width="1.5"/><path d="M14.6 10.8L17.2 15.2" stroke="#d6a232" stroke-width="1.6"/></svg>
<div class="t" style="left:63.80000000000001px;top:411.63px;font-size:12.6px;color:#0866c6;font-weight:normal;-webkit-text-stroke:0.32px currentColor;">09/27 01:20:25</div>
<div class="t" style="left:163.3px;top:411.54px;font-size:12px;color:#0866c6;font-weight:normal;-webkit-text-stroke:0.32px currentColor;">drop</div>
<div class="t" style="left:216.39999999999998px;top:411.54px;font-size:12px;color:#0866c6;font-weight:normal;-webkit-text-stroke:0.32px currentColor;">Inside</div>
<div class="t" style="left:300.6px;top:411.54px;font-size:12px;color:#0866c6;font-weight:normal;-webkit-text-stroke:0.32px currentColor;">Outside</div>
<div class="t" style="left:371.6px;top:411.54px;font-size:12px;color:#0866c6;font-weight:normal;-webkit-text-stroke:0.32px currentColor;">62.0.0.151</div>
<div class="t" style="left:458.70000000000005px;top:411.54px;font-size:12px;color:#0866c6;font-weight:normal;-webkit-text-stroke:0.32px currentColor;">no</div>
<div class="t" style="left:1179px;top:411.54px;font-size:12px;color:#0866c6;font-weight:normal;-webkit-text-stroke:0.32px currentColor;">443</div>
<div class="t" style="left:1245.6px;top:411.54px;font-size:12px;color:#0866c6;font-weight:normal;-webkit-text-stroke:0.32px currentColor;">not-</div>
<div class="t" style="left:1245.6px;top:423.74px;font-size:12px;color:#0866c6;font-weight:normal;-webkit-text-stroke:0.32px currentColor;">applicable</div>
<div class="t" style="left:1330.5px;top:411.54px;font-size:12px;color:#0866c6;font-weight:normal;-webkit-text-stroke:0.32px currentColor;">deny</div>
<div class="t" style="left:1390.3px;top:411.54px;font-size:12px;color:#0866c6;font-weight:normal;-webkit-text-stroke:0.32px currentColor;">Block Web</div>
<div class="t" style="left:1460px;top:411.54px;font-size:12px;color:#0866c6;font-weight:normal;-webkit-text-stroke:0.32px currentColor;">policy-deny</div>
<div class="t" style="left:1591px;top:411.54px;font-size:12px;color:#0866c6;font-weight:normal;-webkit-text-stroke:0.32px currentColor;">0</div>
<div class="a" style="left:0;top:442.80px;width:1635px;height:36.90px;background:#ffffff;border-bottom:1px solid #dfe3e6"></div>
<div class="a" style="left:30.0px;top:443.80px;width:1.2px;height:35.40px;background:#d7dadc"></div>
<div class="a" style="left:57.9px;top:443.80px;width:1.2px;height:35.40px;background:#d7dadc"></div>
<div class="a" style="left:156.8px;top:443.80px;width:1.2px;height:35.40px;background:#d7dadc"></div>
<div class="a" style="left:209.9px;top:443.80px;width:1.2px;height:35.40px;background:#d7dadc"></div>
<div class="a" style="left:293.9px;top:443.80px;width:1.2px;height:35.40px;background:#d7dadc"></div>
<div class="a" style="left:365.1px;top:443.80px;width:1.2px;height:35.40px;background:#d7dadc"></div>
<div class="a" style="left:452.1px;top:443.80px;width:1.2px;height:35.40px;background:#d7dadc"></div>
<div class="a" style="left:533.7px;top:443.80px;width:1.2px;height:35.40px;background:#d7dadc"></div>
<div class="a" style="left:624.8px;top:443.80px;width:1.2px;height:35.40px;background:#d7dadc"></div>
<div class="a" style="left:817.8px;top:443.80px;width:1.2px;height:35.40px;background:#d7dadc"></div>
<div class="a" style="left:1035.7px;top:443.80px;width:1.2px;height:35.40px;background:#d7dadc"></div>
<div class="a" style="left:1172.3px;top:443.80px;width:1.2px;height:35.40px;background:#d7dadc"></div>
<div class="a" style="left:1239.0px;top:443.80px;width:1.2px;height:35.40px;background:#d7dadc"></div>
<div class="a" style="left:1324.0px;top:443.80px;width:1.2px;height:35.40px;background:#d7dadc"></div>
<div class="a" style="left:1384.0px;top:443.80px;width:1.2px;height:35.40px;background:#d7dadc"></div>
<div class="a" style="left:1453.8px;top:443.80px;width:1.2px;height:35.40px;background:#d7dadc"></div>
<div class="a" style="left:1584.6px;top:443.80px;width:1.2px;height:35.40px;background:#d7dadc"></div>
<svg style="left:5px;top:448.80px" width="19" height="19" viewBox="0 0 19 19" fill="none"><path d="M8.5 0.8H2A1.2 1.2 0 0 0 0.8 2V14.3A1.2 1.2 0 0 0 2 15.5H12A1.2 1.2 0 0 0 13.2 14.3V12.3" stroke="#1e6a96" stroke-width="1.5"/><path d="M3 4.3H7M3 7.3H6.2M3 10.3H8.5" stroke="#3f88b8" stroke-width="1.3"/><circle cx="11.6" cy="6.8" r="5" stroke="#d6a232" stroke-width="1.5"/><path d="M14.6 10.8L17.2 15.2" stroke="#d6a232" stroke-width="1.6"/></svg>
<div class="t" style="left:63.80000000000001px;top:448.53px;font-size:12.6px;color:#0866c6;font-weight:normal;-webkit-text-stroke:0.32px currentColor;">09/27 01:20:25</div>
<div class="t" style="left:163.3px;top:448.44px;font-size:12px;color:#0866c6;font-weight:normal;-webkit-text-stroke:0.32px currentColor;">drop</div>
<div class="t" style="left:216.39999999999998px;top:448.44px;font-size:12px;color:#0866c6;font-weight:normal;-webkit-text-stroke:0.32px currentColor;">Inside</div>
<div class="t" style="left:300.6px;top:448.44px;font-size:12px;color:#0866c6;font-weight:normal;-webkit-text-stroke:0.32px currentColor;">Outside</div>
<div class="t" style="left:371.6px;top:448.44px;font-size:12px;color:#0866c6;font-weight:normal;-webkit-text-stroke:0.32px currentColor;">62.0.0.151</div>
<div class="t" style="left:458.70000000000005px;top:448.44px;font-size:12px;color:#0866c6;font-weight:normal;-webkit-text-stroke:0.32px currentColor;">no</div>
<div class="t" style="left:1179px;top:448.44px;font-size:12px;color:#0866c6;font-weight:normal;-webkit-text-stroke:0.32px currentColor;">443</div>
<div class="t" style="left:1245.6px;top:448.44px;font-size:12px;color:#0866c6;font-weight:normal;-webkit-text-stroke:0.32px currentColor;">not-</div>
<div class="t" style="left:1245.6px;top:460.64px;font-size:12px;color:#0866c6;font-weight:normal;-webkit-text-stroke:0.32px currentColor;">applicable</div>
<div class="t" style="left:1330.5px;top:448.44px;font-size:12px;color:#0866c6;font-weight:normal;-webkit-text-stroke:0.32px currentColor;">deny</div>
<div class="t" style="left:1390.3px;top:448.44px;font-size:12px;color:#0866c6;font-weight:normal;-webkit-text-stroke:0.32px currentColor;">Block Web</div>
<div class="t" style="left:1460px;top:448.44px;font-size:12px;color:#0866c6;font-weight:normal;-webkit-text-stroke:0.32px currentColor;">policy-deny</div>
<div class="t" style="left:1591px;top:448.44px;font-size:12px;color:#0866c6;font-weight:normal;-webkit-text-stroke:0.32px currentColor;">0</div>
<div class="a" style="left:0;top:479.70px;width:1635px;height:36.90px;background:#ebf4f7;border-bottom:1px solid #dfe3e6"></div>
<div class="a" style="left:30.0px;top:480.70px;width:1.2px;height:35.40px;background:#d7dadc"></div>
<div class="a" style="left:57.9px;top:480.70px;width:1.2px;height:35.40px;background:#d7dadc"></div>
<div class="a" style="left:156.8px;top:480.70px;width:1.2px;height:35.40px;background:#d7dadc"></div>
<div class="a" style="left:209.9px;top:480.70px;width:1.2px;height:35.40px;background:#d7dadc"></div>
<div class="a" style="left:293.9px;top:480.70px;width:1.2px;height:35.40px;background:#d7dadc"></div>
<div class="a" style="left:365.1px;top:480.70px;width:1.2px;height:35.40px;background:#d7dadc"></div>
<div class="a" style="left:452.1px;top:480.70px;width:1.2px;height:35.40px;background:#d7dadc"></div>
<div class="a" style="left:533.7px;top:480.70px;width:1.2px;height:35.40px;background:#d7dadc"></div>
<div class="a" style="left:624.8px;top:480.70px;width:1.2px;height:35.40px;background:#d7dadc"></div>
<div class="a" style="left:817.8px;top:480.70px;width:1.2px;height:35.40px;background:#d7dadc"></div>
<div class="a" style="left:1035.7px;top:480.70px;width:1.2px;height:35.40px;background:#d7dadc"></div>
<div class="a" style="left:1172.3px;top:480.70px;width:1.2px;height:35.40px;background:#d7dadc"></div>
<div class="a" style="left:1239.0px;top:480.70px;width:1.2px;height:35.40px;background:#d7dadc"></div>
<div class="a" style="left:1324.0px;top:480.70px;width:1.2px;height:35.40px;background:#d7dadc"></div>
<div class="a" style="left:1384.0px;top:480.70px;width:1.2px;height:35.40px;background:#d7dadc"></div>
<div class="a" style="left:1453.8px;top:480.70px;width:1.2px;height:35.40px;background:#d7dadc"></div>
<div class="a" style="left:1584.6px;top:480.70px;width:1.2px;height:35.40px;background:#d7dadc"></div>
<svg style="left:5px;top:485.70px" width="19" height="19" viewBox="0 0 19 19" fill="none"><path d="M8.5 0.8H2A1.2 1.2 0 0 0 0.8 2V14.3A1.2 1.2 0 0 0 2 15.5H12A1.2 1.2 0 0 0 13.2 14.3V12.3" stroke="#1e6a96" stroke-width="1.5"/><path d="M3 4.3H7M3 7.3H6.2M3 10.3H8.5" stroke="#3f88b8" stroke-width="1.3"/><circle cx="11.6" cy="6.8" r="5" stroke="#d6a232" stroke-width="1.5"/><path d="M14.6 10.8L17.2 15.2" stroke="#d6a232" stroke-width="1.6"/></svg>
<div class="t" style="left:63.80000000000001px;top:485.43px;font-size:12.6px;color:#0866c6;font-weight:normal;-webkit-text-stroke:0.32px currentColor;">09/27 01:20:10</div>
<div class="t" style="left:163.3px;top:485.34px;font-size:12px;color:#0866c6;font-weight:normal;-webkit-text-stroke:0.32px currentColor;">drop</div>
<div class="t" style="left:216.39999999999998px;top:485.34px;font-size:12px;color:#0866c6;font-weight:normal;-webkit-text-stroke:0.32px currentColor;">Inside</div>
<div class="t" style="left:300.6px;top:485.34px;font-size:12px;color:#0866c6;font-weight:normal;-webkit-text-stroke:0.32px currentColor;">Outside</div>
<div class="t" style="left:371.6px;top:485.34px;font-size:12px;color:#0866c6;font-weight:normal;-webkit-text-stroke:0.32px currentColor;">62.0.0.151</div>
<div class="t" style="left:458.70000000000005px;top:485.34px;font-size:12px;color:#0866c6;font-weight:normal;-webkit-text-stroke:0.32px currentColor;">no</div>
<div class="t" style="left:1179px;top:485.34px;font-size:12px;color:#0866c6;font-weight:normal;-webkit-text-stroke:0.32px currentColor;">443</div>
<div class="t" style="left:1245.6px;top:485.34px;font-size:12px;color:#0866c6;font-weight:normal;-webkit-text-stroke:0.32px currentColor;">not-</div>
<div class="t" style="left:1245.6px;top:497.54px;font-size:12px;color:#0866c6;font-weight:normal;-webkit-text-stroke:0.32px currentColor;">applicable</div>
<div class="t" style="left:1330.5px;top:485.34px;font-size:12px;color:#0866c6;font-weight:normal;-webkit-text-stroke:0.32px currentColor;">deny</div>
<div class="t" style="left:1390.3px;top:485.34px;font-size:12px;color:#0866c6;font-weight:normal;-webkit-text-stroke:0.32px currentColor;">Block Web</div>
<div class="t" style="left:1460px;top:485.34px;font-size:12px;color:#0866c6;font-weight:normal;-webkit-text-stroke:0.32px currentColor;">policy-deny</div>
<div class="t" style="left:1591px;top:485.34px;font-size:12px;color:#0866c6;font-weight:normal;-webkit-text-stroke:0.32px currentColor;">0</div>
<div class="a" style="left:0;top:516.60px;width:1635px;height:36.90px;background:#ffffff;border-bottom:1px solid #dfe3e6"></div>
<div class="a" style="left:30.0px;top:517.60px;width:1.2px;height:35.40px;background:#d7dadc"></div>
<div class="a" style="left:57.9px;top:517.60px;width:1.2px;height:35.40px;background:#d7dadc"></div>
<div class="a" style="left:156.8px;top:517.60px;width:1.2px;height:35.40px;background:#d7dadc"></div>
<div class="a" style="left:209.9px;top:517.60px;width:1.2px;height:35.40px;background:#d7dadc"></div>
<div class="a" style="left:293.9px;top:517.60px;width:1.2px;height:35.40px;background:#d7dadc"></div>
<div class="a" style="left:365.1px;top:517.60px;width:1.2px;height:35.40px;background:#d7dadc"></div>
<div class="a" style="left:452.1px;top:517.60px;width:1.2px;height:35.40px;background:#d7dadc"></div>
<div class="a" style="left:533.7px;top:517.60px;width:1.2px;height:35.40px;background:#d7dadc"></div>
<div class="a" style="left:624.8px;top:517.60px;width:1.2px;height:35.40px;background:#d7dadc"></div>
<div class="a" style="left:817.8px;top:517.60px;width:1.2px;height:35.40px;background:#d7dadc"></div>
<div class="a" style="left:1035.7px;top:517.60px;width:1.2px;height:35.40px;background:#d7dadc"></div>
<div class="a" style="left:1172.3px;top:517.60px;width:1.2px;height:35.40px;background:#d7dadc"></div>
<div class="a" style="left:1239.0px;top:517.60px;width:1.2px;height:35.40px;background:#d7dadc"></div>
<div class="a" style="left:1324.0px;top:517.60px;width:1.2px;height:35.40px;background:#d7dadc"></div>
<div class="a" style="left:1384.0px;top:517.60px;width:1.2px;height:35.40px;background:#d7dadc"></div>
<div class="a" style="left:1453.8px;top:517.60px;width:1.2px;height:35.40px;background:#d7dadc"></div>
<div class="a" style="left:1584.6px;top:517.60px;width:1.2px;height:35.40px;background:#d7dadc"></div>
<svg style="left:5px;top:522.60px" width="19" height="19" viewBox="0 0 19 19" fill="none"><path d="M8.5 0.8H2A1.2 1.2 0 0 0 0.8 2V14.3A1.2 1.2 0 0 0 2 15.5H12A1.2 1.2 0 0 0 13.2 14.3V12.3" stroke="#1e6a96" stroke-width="1.5"/><path d="M3 4.3H7M3 7.3H6.2M3 10.3H8.5" stroke="#3f88b8" stroke-width="1.3"/><circle cx="11.6" cy="6.8" r="5" stroke="#d6a232" stroke-width="1.5"/><path d="M14.6 10.8L17.2 15.2" stroke="#d6a232" stroke-width="1.6"/></svg>
<div class="t" style="left:63.80000000000001px;top:522.33px;font-size:12.6px;color:#0866c6;font-weight:normal;-webkit-text-stroke:0.32px currentColor;">09/27 01:20:05</div>
<div class="t" style="left:163.3px;top:522.24px;font-size:12px;color:#0866c6;font-weight:normal;-webkit-text-stroke:0.32px currentColor;">drop</div>
<div class="t" style="left:216.39999999999998px;top:522.24px;font-size:12px;color:#0866c6;font-weight:normal;-webkit-text-stroke:0.32px currentColor;">Inside</div>
<div class="t" style="left:300.6px;top:522.24px;font-size:12px;color:#0866c6;font-weight:normal;-webkit-text-stroke:0.32px currentColor;">Outside</div>
<div class="t" style="left:371.6px;top:522.24px;font-size:12px;color:#0866c6;font-weight:normal;-webkit-text-stroke:0.32px currentColor;">62.0.0.151</div>
<div class="t" style="left:458.70000000000005px;top:522.24px;font-size:12px;color:#0866c6;font-weight:normal;-webkit-text-stroke:0.32px currentColor;">no</div>
<div class="t" style="left:1179px;top:522.24px;font-size:12px;color:#0866c6;font-weight:normal;-webkit-text-stroke:0.32px currentColor;">443</div>
<div class="t" style="left:1245.6px;top:522.24px;font-size:12px;color:#0866c6;font-weight:normal;-webkit-text-stroke:0.32px currentColor;">not-</div>
<div class="t" style="left:1245.6px;top:534.44px;font-size:12px;color:#0866c6;font-weight:normal;-webkit-text-stroke:0.32px currentColor;">applicable</div>
<div class="t" style="left:1330.5px;top:522.24px;font-size:12px;color:#0866c6;font-weight:normal;-webkit-text-stroke:0.32px currentColor;">deny</div>
<div class="t" style="left:1390.3px;top:522.24px;font-size:12px;color:#0866c6;font-weight:normal;-webkit-text-stroke:0.32px currentColor;">Block Web</div>
<div class="t" style="left:1460px;top:522.24px;font-size:12px;color:#0866c6;font-weight:normal;-webkit-text-stroke:0.32px currentColor;">policy-deny</div>
<div class="t" style="left:1591px;top:522.24px;font-size:12px;color:#0866c6;font-weight:normal;-webkit-text-stroke:0.32px currentColor;">0</div>
<div class="a" style="left:0;top:553.50px;width:1635px;height:36.90px;background:#ebf4f7;border-bottom:1px solid #dfe3e6"></div>
<div class="a" style="left:30.0px;top:554.50px;width:1.2px;height:35.40px;background:#d7dadc"></div>
<div class="a" style="left:57.9px;top:554.50px;width:1.2px;height:35.40px;background:#d7dadc"></div>
<div class="a" style="left:156.8px;top:554.50px;width:1.2px;height:35.40px;background:#d7dadc"></div>
<div class="a" style="left:209.9px;top:554.50px;width:1.2px;height:35.40px;background:#d7dadc"></div>
<div class="a" style="left:293.9px;top:554.50px;width:1.2px;height:35.40px;background:#d7dadc"></div>
<div class="a" style="left:365.1px;top:554.50px;width:1.2px;height:35.40px;background:#d7dadc"></div>
<div class="a" style="left:452.1px;top:554.50px;width:1.2px;height:35.40px;background:#d7dadc"></div>
<div class="a" style="left:533.7px;top:554.50px;width:1.2px;height:35.40px;background:#d7dadc"></div>
<div class="a" style="left:624.8px;top:554.50px;width:1.2px;height:35.40px;background:#d7dadc"></div>
<div class="a" style="left:817.8px;top:554.50px;width:1.2px;height:35.40px;background:#d7dadc"></div>
<div class="a" style="left:1035.7px;top:554.50px;width:1.2px;height:35.40px;background:#d7dadc"></div>
<div class="a" style="left:1172.3px;top:554.50px;width:1.2px;height:35.40px;background:#d7dadc"></div>
<div class="a" style="left:1239.0px;top:554.50px;width:1.2px;height:35.40px;background:#d7dadc"></div>
<div class="a" style="left:1324.0px;top:554.50px;width:1.2px;height:35.40px;background:#d7dadc"></div>
<div class="a" style="left:1384.0px;top:554.50px;width:1.2px;height:35.40px;background:#d7dadc"></div>
<div class="a" style="left:1453.8px;top:554.50px;width:1.2px;height:35.40px;background:#d7dadc"></div>
<div class="a" style="left:1584.6px;top:554.50px;width:1.2px;height:35.40px;background:#d7dadc"></div>
<svg style="left:5px;top:559.50px" width="19" height="19" viewBox="0 0 19 19" fill="none"><path d="M8.5 0.8H2A1.2 1.2 0 0 0 0.8 2V14.3A1.2 1.2 0 0 0 2 15.5H12A1.2 1.2 0 0 0 13.2 14.3V12.3" stroke="#1e6a96" stroke-width="1.5"/><path d="M3 4.3H7M3 7.3H6.2M3 10.3H8.5" stroke="#3f88b8" stroke-width="1.3"/><circle cx="11.6" cy="6.8" r="5" stroke="#d6a232" stroke-width="1.5"/><path d="M14.6 10.8L17.2 15.2" stroke="#d6a232" stroke-width="1.6"/></svg>
<div class="t" style="left:63.80000000000001px;top:559.23px;font-size:12.6px;color:#0866c6;font-weight:normal;-webkit-text-stroke:0.32px currentColor;">09/27 01:20:00</div>
<div class="t" style="left:163.3px;top:559.14px;font-size:12px;color:#0866c6;font-weight:normal;-webkit-text-stroke:0.32px currentColor;">drop</div>
<div class="t" style="left:216.39999999999998px;top:559.14px;font-size:12px;color:#0866c6;font-weight:normal;-webkit-text-stroke:0.32px currentColor;">Inside</div>
<div class="t" style="left:300.6px;top:559.14px;font-size:12px;color:#0866c6;font-weight:normal;-webkit-text-stroke:0.32px currentColor;">Outside</div>
<div class="t" style="left:371.6px;top:559.14px;font-size:12px;color:#0866c6;font-weight:normal;-webkit-text-stroke:0.32px currentColor;">62.0.0.151</div>
<div class="t" style="left:458.70000000000005px;top:559.14px;font-size:12px;color:#0866c6;font-weight:normal;-webkit-text-stroke:0.32px currentColor;">no</div>
<div class="t" style="left:1179px;top:559.14px;font-size:12px;color:#0866c6;font-weight:normal;-webkit-text-stroke:0.32px currentColor;">443</div>
<div class="t" style="left:1245.6px;top:559.14px;font-size:12px;color:#0866c6;font-weight:normal;-webkit-text-stroke:0.32px currentColor;">not-</div>
<div class="t" style="left:1245.6px;top:571.34px;font-size:12px;color:#0866c6;font-weight:normal;-webkit-text-stroke:0.32px currentColor;">applicable</div>
<div class="t" style="left:1330.5px;top:559.14px;font-size:12px;color:#0866c6;font-weight:normal;-webkit-text-stroke:0.32px currentColor;">deny</div>
<div class="t" style="left:1390.3px;top:559.14px;font-size:12px;color:#0866c6;font-weight:normal;-webkit-text-stroke:0.32px currentColor;">Block Web</div>
<div class="t" style="left:1460px;top:559.14px;font-size:12px;color:#0866c6;font-weight:normal;-webkit-text-stroke:0.32px currentColor;">policy-deny</div>
<div class="t" style="left:1591px;top:559.14px;font-size:12px;color:#0866c6;font-weight:normal;-webkit-text-stroke:0.32px currentColor;">0</div>
<div class="a" style="left:0;top:590.40px;width:1635px;height:36.90px;background:#ffffff;border-bottom:1px solid #dfe3e6"></div>
<div class="a" style="left:30.0px;top:591.40px;width:1.2px;height:35.40px;background:#d7dadc"></div>
<div class="a" style="left:57.9px;top:591.40px;width:1.2px;height:35.40px;background:#d7dadc"></div>
<div class="a" style="left:156.8px;top:591.40px;width:1.2px;height:35.40px;background:#d7dadc"></div>
<div class="a" style="left:209.9px;top:591.40px;width:1.2px;height:35.40px;background:#d7dadc"></div>
<div class="a" style="left:293.9px;top:591.40px;width:1.2px;height:35.40px;background:#d7dadc"></div>
<div class="a" style="left:365.1px;top:591.40px;width:1.2px;height:35.40px;background:#d7dadc"></div>
<div class="a" style="left:452.1px;top:591.40px;width:1.2px;height:35.40px;background:#d7dadc"></div>
<div class="a" style="left:533.7px;top:591.40px;width:1.2px;height:35.40px;background:#d7dadc"></div>
<div class="a" style="left:624.8px;top:591.40px;width:1.2px;height:35.40px;background:#d7dadc"></div>
<div class="a" style="left:817.8px;top:591.40px;width:1.2px;height:35.40px;background:#d7dadc"></div>
<div class="a" style="left:1035.7px;top:591.40px;width:1.2px;height:35.40px;background:#d7dadc"></div>
<div class="a" style="left:1172.3px;top:591.40px;width:1.2px;height:35.40px;background:#d7dadc"></div>
<div class="a" style="left:1239.0px;top:591.40px;width:1.2px;height:35.40px;background:#d7dadc"></div>
<div class="a" style="left:1324.0px;top:591.40px;width:1.2px;height:35.40px;background:#d7dadc"></div>
<div class="a" style="left:1384.0px;top:591.40px;width:1.2px;height:35.40px;background:#d7dadc"></div>
<div class="a" style="left:1453.8px;top:591.40px;width:1.2px;height:35.40px;background:#d7dadc"></div>
<div class="a" style="left:1584.6px;top:591.40px;width:1.2px;height:35.40px;background:#d7dadc"></div>
<svg style="left:5px;top:596.40px" width="19" height="19" viewBox="0 0 19 19" fill="none"><path d="M8.5 0.8H2A1.2 1.2 0 0 0 0.8 2V14.3A1.2 1.2 0 0 0 2 15.5H12A1.2 1.2 0 0 0 13.2 14.3V12.3" stroke="#1e6a96" stroke-width="1.5"/><path d="M3 4.3H7M3 7.3H6.2M3 10.3H8.5" stroke="#3f88b8" stroke-width="1.3"/><circle cx="11.6" cy="6.8" r="5" stroke="#d6a232" stroke-width="1.5"/><path d="M14.6 10.8L17.2 15.2" stroke="#d6a232" stroke-width="1.6"/></svg>
<div class="t" style="left:63.80000000000001px;top:596.13px;font-size:12.6px;color:#0866c6;font-weight:normal;-webkit-text-stroke:0.32px currentColor;">09/27 01:19:50</div>
<div class="t" style="left:163.3px;top:596.04px;font-size:12px;color:#0866c6;font-weight:normal;-webkit-text-stroke:0.32px currentColor;">drop</div>
<div class="t" style="left:216.39999999999998px;top:596.04px;font-size:12px;color:#0866c6;font-weight:normal;-webkit-text-stroke:0.32px currentColor;">Inside</div>
<div class="t" style="left:300.6px;top:596.04px;font-size:12px;color:#0866c6;font-weight:normal;-webkit-text-stroke:0.32px currentColor;">Outside</div>
<div class="t" style="left:371.6px;top:596.04px;font-size:12px;color:#0866c6;font-weight:normal;-webkit-text-stroke:0.32px currentColor;">62.0.0.151</div>
<div class="t" style="left:458.70000000000005px;top:596.04px;font-size:12px;color:#0866c6;font-weight:normal;-webkit-text-stroke:0.32px currentColor;">no</div>
<div class="t" style="left:1179px;top:596.04px;font-size:12px;color:#0866c6;font-weight:normal;-webkit-text-stroke:0.32px currentColor;">443</div>
<div class="t" style="left:1245.6px;top:596.04px;font-size:12px;color:#0866c6;font-weight:normal;-webkit-text-stroke:0.32px currentColor;">not-</div>
<div class="t" style="left:1245.6px;top:608.24px;font-size:12px;color:#0866c6;font-weight:normal;-webkit-text-stroke:0.32px currentColor;">applicable</div>
<div class="t" style="left:1330.5px;top:596.04px;font-size:12px;color:#0866c6;font-weight:normal;-webkit-text-stroke:0.32px currentColor;">deny</div>
<div class="t" style="left:1390.3px;top:596.04px;font-size:12px;color:#0866c6;font-weight:normal;-webkit-text-stroke:0.32px currentColor;">Block Web</div>
<div class="t" style="left:1460px;top:596.04px;font-size:12px;color:#0866c6;font-weight:normal;-webkit-text-stroke:0.32px currentColor;">policy-deny</div>
<div class="t" style="left:1591px;top:596.04px;font-size:12px;color:#0866c6;font-weight:normal;-webkit-text-stroke:0.32px currentColor;">0</div>
<div class="a" style="left:0;top:627.30px;width:1635px;height:36.90px;background:#ebf4f7;border-bottom:1px solid #dfe3e6"></div>
<div class="a" style="left:30.0px;top:628.30px;width:1.2px;height:35.40px;background:#d7dadc"></div>
<div class="a" style="left:57.9px;top:628.30px;width:1.2px;height:35.40px;background:#d7dadc"></div>
<div class="a" style="left:156.8px;top:628.30px;width:1.2px;height:35.40px;background:#d7dadc"></div>
<div class="a" style="left:209.9px;top:628.30px;width:1.2px;height:35.40px;background:#d7dadc"></div>
<div class="a" style="left:293.9px;top:628.30px;width:1.2px;height:35.40px;background:#d7dadc"></div>
<div class="a" style="left:365.1px;top:628.30px;width:1.2px;height:35.40px;background:#d7dadc"></div>
<div class="a" style="left:452.1px;top:628.30px;width:1.2px;height:35.40px;background:#d7dadc"></div>
<div class="a" style="left:533.7px;top:628.30px;width:1.2px;height:35.40px;background:#d7dadc"></div>
<div class="a" style="left:624.8px;top:628.30px;width:1.2px;height:35.40px;background:#d7dadc"></div>
<div class="a" style="left:817.8px;top:628.30px;width:1.2px;height:35.40px;background:#d7dadc"></div>
<div class="a" style="left:1035.7px;top:628.30px;width:1.2px;height:35.40px;background:#d7dadc"></div>
<div class="a" style="left:1172.3px;top:628.30px;width:1.2px;height:35.40px;background:#d7dadc"></div>
<div class="a" style="left:1239.0px;top:628.30px;width:1.2px;height:35.40px;background:#d7dadc"></div>
<div class="a" style="left:1324.0px;top:628.30px;width:1.2px;height:35.40px;background:#d7dadc"></div>
<div class="a" style="left:1384.0px;top:628.30px;width:1.2px;height:35.40px;background:#d7dadc"></div>
<div class="a" style="left:1453.8px;top:628.30px;width:1.2px;height:35.40px;background:#d7dadc"></div>
<div class="a" style="left:1584.6px;top:628.30px;width:1.2px;height:35.40px;background:#d7dadc"></div>
<svg style="left:5px;top:633.30px" width="19" height="19" viewBox="0 0 19 19" fill="none"><path d="M8.5 0.8H2A1.2 1.2 0 0 0 0.8 2V14.3A1.2 1.2 0 0 0 2 15.5H12A1.2 1.2 0 0 0 13.2 14.3V12.3" stroke="#1e6a96" stroke-width="1.5"/><path d="M3 4.3H7M3 7.3H6.2M3 10.3H8.5" stroke="#3f88b8" stroke-width="1.3"/><circle cx="11.6" cy="6.8" r="5" stroke="#d6a232" stroke-width="1.5"/><path d="M14.6 10.8L17.2 15.2" stroke="#d6a232" stroke-width="1.6"/></svg>
<div class="t" style="left:63.80000000000001px;top:633.03px;font-size:12.6px;color:#0866c6;font-weight:normal;-webkit-text-stroke:0.32px currentColor;">09/27 01:19:45</div>
<div class="t" style="left:163.3px;top:632.94px;font-size:12px;color:#0866c6;font-weight:normal;-webkit-text-stroke:0.32px currentColor;">drop</div>
<div class="t" style="left:216.39999999999998px;top:632.94px;font-size:12px;color:#0866c6;font-weight:normal;-webkit-text-stroke:0.32px currentColor;">Inside</div>
<div class="t" style="left:300.6px;top:632.94px;font-size:12px;color:#0866c6;font-weight:normal;-webkit-text-stroke:0.32px currentColor;">Outside</div>
<div class="t" style="left:371.6px;top:632.94px;font-size:12px;color:#0866c6;font-weight:normal;-webkit-text-stroke:0.32px currentColor;">62.0.0.151</div>
<div class="t" style="left:458.70000000000005px;top:632.94px;font-size:12px;color:#0866c6;font-weight:normal;-webkit-text-stroke:0.32px currentColor;">no</div>
<div class="t" style="left:1179px;top:632.94px;font-size:12px;color:#0866c6;font-weight:normal;-webkit-text-stroke:0.32px currentColor;">443</div>
<div class="t" style="left:1245.6px;top:632.94px;font-size:12px;color:#0866c6;font-weight:normal;-webkit-text-stroke:0.32px currentColor;">not-</div>
<div class="t" style="left:1245.6px;top:645.14px;font-size:12px;color:#0866c6;font-weight:normal;-webkit-text-stroke:0.32px currentColor;">applicable</div>
<div class="t" style="left:1330.5px;top:632.94px;font-size:12px;color:#0866c6;font-weight:normal;-webkit-text-stroke:0.32px currentColor;">deny</div>
<div class="t" style="left:1390.3px;top:632.94px;font-size:12px;color:#0866c6;font-weight:normal;-webkit-text-stroke:0.32px currentColor;">Block Web</div>
<div class="t" style="left:1460px;top:632.94px;font-size:12px;color:#0866c6;font-weight:normal;-webkit-text-stroke:0.32px currentColor;">policy-deny</div>
<div class="t" style="left:1591px;top:632.94px;font-size:12px;color:#0866c6;font-weight:normal;-webkit-text-stroke:0.32px currentColor;">0</div>
<div class="a" style="left:0;top:664.20px;width:1635px;height:36.90px;background:#ffffff;border-bottom:1px solid #dfe3e6"></div>
<div class="a" style="left:30.0px;top:665.20px;width:1.2px;height:35.40px;background:#d7dadc"></div>
<div class="a" style="left:57.9px;top:665.20px;width:1.2px;height:35.40px;background:#d7dadc"></div>
<div class="a" style="left:156.8px;top:665.20px;width:1.2px;height:35.40px;background:#d7dadc"></div>
<div class="a" style="left:209.9px;top:665.20px;width:1.2px;height:35.40px;background:#d7dadc"></div>
<div class="a" style="left:293.9px;top:665.20px;width:1.2px;height:35.40px;background:#d7dadc"></div>
<div class="a" style="left:365.1px;top:665.20px;width:1.2px;height:35.40px;background:#d7dadc"></div>
<div class="a" style="left:452.1px;top:665.20px;width:1.2px;height:35.40px;background:#d7dadc"></div>
<div class="a" style="left:533.7px;top:665.20px;width:1.2px;height:35.40px;background:#d7dadc"></div>
<div class="a" style="left:624.8px;top:665.20px;width:1.2px;height:35.40px;background:#d7dadc"></div>
<div class="a" style="left:817.8px;top:665.20px;width:1.2px;height:35.40px;background:#d7dadc"></div>
<div class="a" style="left:1035.7px;top:665.20px;width:1.2px;height:35.40px;background:#d7dadc"></div>
<div class="a" style="left:1172.3px;top:665.20px;width:1.2px;height:35.40px;background:#d7dadc"></div>
<div class="a" style="left:1239.0px;top:665.20px;width:1.2px;height:35.40px;background:#d7dadc"></div>
<div class="a" style="left:1324.0px;top:665.20px;width:1.2px;height:35.40px;background:#d7dadc"></div>
<div class="a" style="left:1384.0px;top:665.20px;width:1.2px;height:35.40px;background:#d7dadc"></div>
<div class="a" style="left:1453.8px;top:665.20px;width:1.2px;height:35.40px;background:#d7dadc"></div>
<div class="a" style="left:1584.6px;top:665.20px;width:1.2px;height:35.40px;background:#d7dadc"></div>
<svg style="left:5px;top:670.20px" width="19" height="19" viewBox="0 0 19 19" fill="none"><path d="M8.5 0.8H2A1.2 1.2 0 0 0 0.8 2V14.3A1.2 1.2 0 0 0 2 15.5H12A1.2 1.2 0 0 0 13.2 14.3V12.3" stroke="#1e6a96" stroke-width="1.5"/><path d="M3 4.3H7M3 7.3H6.2M3 10.3H8.5" stroke="#3f88b8" stroke-width="1.3"/><circle cx="11.6" cy="6.8" r="5" stroke="#d6a232" stroke-width="1.5"/><path d="M14.6 10.8L17.2 15.2" stroke="#d6a232" stroke-width="1.6"/></svg>
<div class="t" style="left:63.80000000000001px;top:669.93px;font-size:12.6px;color:#0866c6;font-weight:normal;-webkit-text-stroke:0.32px currentColor;">09/27 01:19:40</div>
<div class="t" style="left:163.3px;top:669.84px;font-size:12px;color:#0866c6;font-weight:normal;-webkit-text-stroke:0.32px currentColor;">drop</div>
<div class="t" style="left:216.39999999999998px;top:669.84px;font-size:12px;color:#0866c6;font-weight:normal;-webkit-text-stroke:0.32px currentColor;">Inside</div>
<div class="t" style="left:300.6px;top:669.84px;font-size:12px;color:#0866c6;font-weight:normal;-webkit-text-stroke:0.32px currentColor;">Outside</div>
<div class="t" style="left:371.6px;top:669.84px;font-size:12px;color:#0866c6;font-weight:normal;-webkit-text-stroke:0.32px currentColor;">62.0.0.151</div>
<div class="t" style="left:458.70000000000005px;top:669.84px;font-size:12px;color:#0866c6;font-weight:normal;-webkit-text-stroke:0.32px currentColor;">no</div>
<div class="t" style="left:1179px;top:669.84px;font-size:12px;color:#0866c6;font-weight:normal;-webkit-text-stroke:0.32px currentColor;">443</div>
<div class="t" style="left:1245.6px;top:669.84px;font-size:12px;color:#0866c6;font-weight:normal;-webkit-text-stroke:0.32px currentColor;">not-</div>
<div class="t" style="left:1245.6px;top:682.04px;font-size:12px;color:#0866c6;font-weight:normal;-webkit-text-stroke:0.32px currentColor;">applicable</div>
<div class="t" style="left:1330.5px;top:669.84px;font-size:12px;color:#0866c6;font-weight:normal;-webkit-text-stroke:0.32px currentColor;">deny</div>
<div class="t" style="left:1390.3px;top:669.84px;font-size:12px;color:#0866c6;font-weight:normal;-webkit-text-stroke:0.32px currentColor;">Block Web</div>
<div class="t" style="left:1460px;top:669.84px;font-size:12px;color:#0866c6;font-weight:normal;-webkit-text-stroke:0.32px currentColor;">policy-deny</div>
<div class="t" style="left:1591px;top:669.84px;font-size:12px;color:#0866c6;font-weight:normal;-webkit-text-stroke:0.32px currentColor;">0</div>
<div class="a" style="left:0;top:701.10px;width:1635px;height:36.90px;background:#ebf4f7;border-bottom:1px solid #dfe3e6"></div>
<div class="a" style="left:30.0px;top:702.10px;width:1.2px;height:35.40px;background:#d7dadc"></div>
<div class="a" style="left:57.9px;top:702.10px;width:1.2px;height:35.40px;background:#d7dadc"></div>
<div class="a" style="left:156.8px;top:702.10px;width:1.2px;height:35.40px;background:#d7dadc"></div>
<div class="a" style="left:209.9px;top:702.10px;width:1.2px;height:35.40px;background:#d7dadc"></div>
<div class="a" style="left:293.9px;top:702.10px;width:1.2px;height:35.40px;background:#d7dadc"></div>
<div class="a" style="left:365.1px;top:702.10px;width:1.2px;height:35.40px;background:#d7dadc"></div>
<div class="a" style="left:452.1px;top:702.10px;width:1.2px;height:35.40px;background:#d7dadc"></div>
<div class="a" style="left:533.7px;top:702.10px;width:1.2px;height:35.40px;background:#d7dadc"></div>
<div class="a" style="left:624.8px;top:702.10px;width:1.2px;height:35.40px;background:#d7dadc"></div>
<div class="a" style="left:817.8px;top:702.10px;width:1.2px;height:35.40px;background:#d7dadc"></div>
<div class="a" style="left:1035.7px;top:702.10px;width:1.2px;height:35.40px;background:#d7dadc"></div>
<div class="a" style="left:1172.3px;top:702.10px;width:1.2px;height:35.40px;background:#d7dadc"></div>
<div class="a" style="left:1239.0px;top:702.10px;width:1.2px;height:35.40px;background:#d7dadc"></div>
<div class="a" style="left:1324.0px;top:702.10px;width:1.2px;height:35.40px;background:#d7dadc"></div>
<div class="a" style="left:1384.0px;top:702.10px;width:1.2px;height:35.40px;background:#d7dadc"></div>
<div class="a" style="left:1453.8px;top:702.10px;width:1.2px;height:35.40px;background:#d7dadc"></div>
<div class="a" style="left:1584.6px;top:702.10px;width:1.2px;height:35.40px;background:#d7dadc"></div>
<svg style="left:5px;top:707.10px" width="19" height="19" viewBox="0 0 19 19" fill="none"><path d="M8.5 0.8H2A1.2 1.2 0 0 0 0.8 2V14.3A1.2 1.2 0 0 0 2 15.5H12A1.2 1.2 0 0 0 13.2 14.3V12.3" stroke="#1e6a96" stroke-width="1.5"/><path d="M3 4.3H7M3 7.3H6.2M3 10.3H8.5" stroke="#3f88b8" stroke-width="1.3"/><circle cx="11.6" cy="6.8" r="5" stroke="#d6a232" stroke-width="1.5"/><path d="M14.6 10.8L17.2 15.2" stroke="#d6a232" stroke-width="1.6"/></svg>
<div class="t" style="left:63.80000000000001px;top:706.83px;font-size:12.6px;color:#0866c6;font-weight:normal;-webkit-text-stroke:0.32px currentColor;">09/27 01:19:35</div>
<div class="t" style="left:163.3px;top:706.74px;font-size:12px;color:#0866c6;font-weight:normal;-webkit-text-stroke:0.32px currentColor;">drop</div>
<div class="t" style="left:216.39999999999998px;top:706.74px;font-size:12px;color:#0866c6;font-weight:normal;-webkit-text-stroke:0.32px currentColor;">Inside</div>
<div class="t" style="left:300.6px;top:706.74px;font-size:12px;color:#0866c6;font-weight:normal;-webkit-text-stroke:0.32px currentColor;">Outside</div>
<div class="t" style="left:371.6px;top:706.74px;font-size:12px;color:#0866c6;font-weight:normal;-webkit-text-stroke:0.32px currentColor;">62.0.0.151</div>
<div class="t" style="left:458.70000000000005px;top:706.74px;font-size:12px;color:#0866c6;font-weight:normal;-webkit-text-stroke:0.32px currentColor;">no</div>
<div class="t" style="left:1179px;top:706.74px;font-size:12px;color:#0866c6;font-weight:normal;-webkit-text-stroke:0.32px currentColor;">443</div>
<div class="t" style="left:1245.6px;top:706.74px;font-size:12px;color:#0866c6;font-weight:normal;-webkit-text-stroke:0.32px currentColor;">not-</div>
<div class="t" style="left:1245.6px;top:718.94px;font-size:12px;color:#0866c6;font-weight:normal;-webkit-text-stroke:0.32px currentColor;">applicable</div>
<div class="t" style="left:1330.5px;top:706.74px;font-size:12px;color:#0866c6;font-weight:normal;-webkit-text-stroke:0.32px currentColor;">deny</div>
<div class="t" style="left:1390.3px;top:706.74px;font-size:12px;color:#0866c6;font-weight:normal;-webkit-text-stroke:0.32px currentColor;">Block Web</div>
<div class="t" style="left:1460px;top:706.74px;font-size:12px;color:#0866c6;font-weight:normal;-webkit-text-stroke:0.32px currentColor;">policy-deny</div>
<div class="t" style="left:1591px;top:706.74px;font-size:12px;color:#0866c6;font-weight:normal;-webkit-text-stroke:0.32px currentColor;">0</div>
</div>
<div class="a" style="left:1848px;top:162px;width:14px;height:707px;background:#f7f7f7"></div>
<div class="a" style="left:1851px;top:163px;width:8px;height:673px;background:#bababa;border-radius:4px"></div>
<div class="a" style="left:213px;top:869px;width:1649px;height:14px;background:#f8f8f8"></div>
<div class="a" style="left:214px;top:873px;width:1133px;height:8px;background:#bababa;border-radius:4px"></div>
<div class="a" style="left:213px;top:883px;width:1649px;height:1px;background:#cdd4d6"></div>
<div class="a" style="left:213px;top:884px;width:1649px;height:29px;background:#f8f9f9"></div>
<svg style="left:221px;top:895px" width="13" height="9" viewBox="0 0 13 9" fill="#dadde0"><rect x="0" y="0" width="1.3" height="9"/><path d="M6 0V9L1.5 4.5Z M11.5 0V9L7 4.5Z"/></svg>
<svg style="left:251px;top:895px" width="5" height="9" viewBox="0 0 5 9" fill="#dadde0"><path d="M5 0V9L0.5 4.5Z"/></svg>
<div class="a" style="left:271.5px;top:890px;width:1px;height:17px;background:#dcdfe1"></div>
<div class="a" style="left:396.4px;top:890px;width:1px;height:17px;background:#dcdfe1"></div>
<div class="a" style="left:456.3px;top:890px;width:1px;height:17px;background:#dcdfe1"></div>
<div class="t" style="left:278.3px;top:892.70px;font-size:12.4px;color:#90b434;font-weight:bold;-webkit-text-stroke:0px currentColor;"><span style="color:#f7a81b">1</span> 2 3 4 5 6 7 8 9 10</div>
<svg style="left:412px;top:895px" width="6" height="9" viewBox="0 0 6 9" fill="#555a5f"><path d="M0 0V9L5.5 4.5Z"/></svg>
<svg style="left:438px;top:895px" width="11" height="9" viewBox="0 0 11 9" fill="#666b70"><path d="M0 0V9L5 4.5Z M5.5 0V9L10.5 4.5Z"/></svg>
<div class="a" style="left:462px;top:891px;width:15px;height:15px;border:1.3px solid #555a5f;border-radius:2px;background:#fff"></div>
<div class="t" style="left:482.4px;top:896.98px;font-size:12.55px;color:#222;font-weight:normal;">Resolve hostname</div>
<div class="a" style="left:601px;top:891px;width:15px;height:15px;border:1.3px solid #555a5f;border-radius:2px;background:#fff"></div>
<div class="t" style="left:621.2px;top:896.11px;font-size:13.1px;color:#222;font-weight:normal;">Highlight Policy Actions</div>
<div class="t" style="left:1543.5px;top:891.96px;font-size:12.8px;color:#222;font-weight:normal;">Displaying logs 1 - 20</div>
<div class="a" style="left:1673px;top:891px;width:1px;height:16px;background:#dcdfe1"></div>
<div class="a" style="left:1677px;top:888.5px;width:54px;height:21px;border:1px solid #c3c6c9;border-radius:2px;background:#fff"></div>
<div class="a" style="left:1709px;top:889px;width:1px;height:20px;background:#c3c6c9"></div>
<div class="t" style="left:1682px;top:892.09px;font-size:12.3px;color:#222;font-weight:normal;">20</div>
<svg style="left:1713px;top:896px" width="12" height="7" viewBox="0 0 12 7" fill="none" stroke="#888" stroke-width="1.2"><path d="M1 1L6 6L11 1"/></svg>
<div class="t" style="left:1734.5px;top:892.39px;font-size:12.3px;color:#222;font-weight:normal;">per page</div>
<div class="a" style="left:1790.5px;top:891px;width:1px;height:16px;background:#dcdfe1"></div>
<div class="a" style="left:1795px;top:888.5px;width:64px;height:21px;border:1px solid #c3c6c9;border-radius:2px;background:#fff"></div>
<div class="a" style="left:1836.5px;top:889px;width:1px;height:20px;background:#c3c6c9"></div>
<div class="t" style="left:1800px;top:892.34px;font-size:12px;color:#222;font-weight:normal;">DESC</div>
<svg style="left:1841px;top:896px" width="12" height="7" viewBox="0 0 12 7" fill="none" stroke="#888" stroke-width="1.2"><path d="M1 1L6 6L11 1"/></svg>
<svg style="left:213px;top:485px" width="6" height="38" viewBox="0 0 6 38"><path d="M0 2L4.5 0V38L0 36Z" fill="#e6e8ea" stroke="#d5d8da" stroke-width="0.6"/><path d="M1 19L3.5 16.5V21.5Z" fill="#8c9196"/></svg>
<div class="a" style="left:0;top:913px;width:1862px;height:29px;background:#0e1216"></div>
<div class="a" style="left:0;top:913px;width:1862px;height:29px;background:#04111a;border-radius:0 0 8px 8px;border:1px solid #1c252b;border-top:none"></div>
<div class="t" style="left:13.7px;top:922.00px;font-size:12.4px;color:#a3a8ad;font-weight:normal;-webkit-text-stroke:0px currentColor;">admin</div>
<div class="t" style="left:64px;top:922.09px;font-size:12.3px;color:#a3a8ad;font-weight:normal;-webkit-text-stroke:0px currentColor;">Logout</div>
<div class="t" style="left:116.2px;top:921.37px;font-size:13.15px;color:#a3a8ad;font-weight:normal;-webkit-text-stroke:0px currentColor;">Last Login Time: 09/23/2023 05:04:44</div>
<div class="t" style="left:350.8px;top:921.41px;font-size:13.1px;color:#a3a8ad;font-weight:normal;-webkit-text-stroke:0px currentColor;">Session Expire Time: 10/26/2023 22:58:28</div>
<div class="a" style="left:56.5px;top:921px;width:1px;height:13px;background:#8a8f94"></div>
<div class="a" style="left:109.5px;top:921px;width:1px;height:13px;background:#8a8f94"></div>
<div class="a" style="left:344px;top:921px;width:1px;height:13px;background:#8a8f94"></div>
<div class="a" style="left:603.5px;top:921px;width:1px;height:13px;background:#8a8f94"></div>
<div class="a" style="left:1612px;top:919px;width:17.5px;height:16.5px;border:1px solid #1b2a6e"></div>
<svg style="left:1612px;top:919px" width="18" height="17" viewBox="0 0 18 17" fill="none" stroke="#8a8f94" stroke-width="1.3"><path d="M0.5 2L2 3.5L4.5 0.5M0.5 8L2 9.5L4.5 6.5M0.5 14L2 15.5L4.5 12.5M7 1.5H17M7 8H17M7 14.5H17"/></svg>
<div class="t" style="left:1634.3px;top:922.68px;font-size:11.6px;color:#969ba0;font-weight:normal;-webkit-text-stroke:0px currentColor;">Tasks</div>
<div class="a" style="left:1677.5px;top:920px;width:1px;height:15px;background:#8a8f94"></div>
<div class="t" style="left:1686.2px;top:922.26px;font-size:12.1px;color:#969ba0;font-weight:normal;-webkit-text-stroke:0px currentColor;">Language</div>
<svg style="left:1754px;top:921px" width="22" height="15" viewBox="0 0 22 15" fill="#fa582d"><path d="M0 8L7 1L10 4L3 11Z"/><path d="M6 11L13 4L16 7L9 14Z"/><path d="M12 4L15.5 0.5L22 7L15 14L12 11L16 7Z"/></svg>
<div class="t" style="left:1779.4px;top:918.86px;font-size:17.3px;color:#ffffff;font-weight:bold;letter-spacing:0.015em;-webkit-text-stroke:0px currentColor;">paloalto</div>
<div class="t" style="left:1814px;top:934.69px;font-size:4.5px;color:#ffffff;font-weight:bold;letter-spacing:0.1em;">NETWORKS</div>
</body></html>
